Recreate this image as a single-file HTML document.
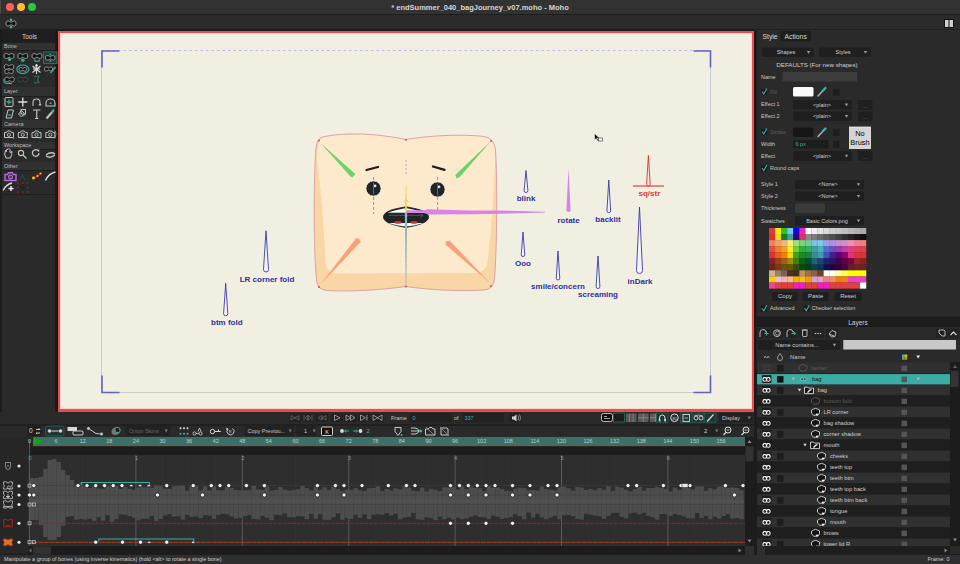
<!DOCTYPE html><html><head><meta charset="utf-8"><style>
html,body{margin:0;padding:0;}
body{width:960px;height:564px;position:relative;overflow:hidden;background:#2a2a2a;font-family:"Liberation Sans",sans-serif;}
.a{position:absolute;}
.t{position:absolute;white-space:nowrap;}
svg.a{overflow:visible;}
</style></head><body>
<div class="a" style="left:0px;top:0px;width:960px;height:14px;background:#323232;"></div>
<div class="a" style="left:0px;top:0px;width:1px;height:30px;background:#4a4a4a;"></div>
<div class="a" style="left:0px;top:14px;width:960px;height:1px;background:#1d1d1d;"></div>
<div class="a" style="left:0px;top:15px;width:960px;height:15px;background:#2b2b2b;"></div>
<div class="a" style="left:0px;top:29px;width:960px;height:1px;background:#1f1f1f;"></div>
<div class="a" style="left:5.5px;top:3px;width:8px;height:8px;border-radius:50%;background:#fe5f57"></div>
<div class="a" style="left:16.5px;top:3px;width:8px;height:8px;border-radius:50%;background:#febc2e"></div>
<div class="a" style="left:27.5px;top:3px;width:8px;height:8px;border-radius:50%;background:#28c840"></div>
<div class="t" style="left:330px;width:300px;text-align:center;top:2.50px;font-size:7.5px;line-height:9.00px;color:#d6d6d6;font-weight:bold;">* endSummer_040_bagJourney_v07.moho - Moho</div>
<svg class="a" style="left:944px;top:19px;" width="10" height="9" viewBox="0 0 10 9"><rect x="0" y="0" width="10" height="9" fill="#111"/><rect x="1" y="1" width="3.5" height="7" fill="#cfcfcf"/><rect x="5.5" y="1" width="3.5" height="7" fill="#cfcfcf"/></svg>
<div class="a" style="left:0px;top:30px;width:57px;height:382px;background:#2a2a2a;"></div>
<div class="a" style="left:0px;top:30px;width:2px;height:382px;background:#1d1d1d;"></div>
<div class="a" style="left:55px;top:30px;width:2px;height:382px;background:#1a1a1a;"></div>
<div class="a" style="left:2px;top:30px;width:53px;height:13px;background:#1f1f1f;"></div>
<div class="t" style="left:-120.5px;width:300px;text-align:center;top:33.10px;font-size:6.5px;line-height:7.80px;color:#d2d2d2;font-weight:normal;">Tools</div>
<div class="a" style="left:2px;top:43px;width:53px;height:7px;background:#313131;"></div>
<div class="a" style="left:2px;top:50px;width:53px;height:1px;background:#1e1e1e;"></div>
<div class="t" style="left:4px;top:43.20px;font-size:5.5px;line-height:6.60px;color:#bdbdbd;font-weight:normal;">Bone</div>
<div class="a" style="left:2px;top:87px;width:53px;height:9px;background:#313131;"></div>
<div class="a" style="left:2px;top:96px;width:53px;height:1px;background:#1e1e1e;"></div>
<div class="t" style="left:4px;top:88.20px;font-size:5.5px;line-height:6.60px;color:#bdbdbd;font-weight:normal;">Layer</div>
<div class="a" style="left:2px;top:120px;width:53px;height:8px;background:#313131;"></div>
<div class="a" style="left:2px;top:128px;width:53px;height:1px;background:#1e1e1e;"></div>
<div class="t" style="left:4px;top:120.70px;font-size:5.5px;line-height:6.60px;color:#bdbdbd;font-weight:normal;">Camera</div>
<div class="a" style="left:2px;top:142px;width:53px;height:7px;background:#313131;"></div>
<div class="a" style="left:2px;top:149px;width:53px;height:1px;background:#1e1e1e;"></div>
<div class="t" style="left:4px;top:142.20px;font-size:5.5px;line-height:6.60px;color:#bdbdbd;font-weight:normal;">Workspace</div>
<div class="a" style="left:2px;top:162px;width:53px;height:8px;background:#313131;"></div>
<div class="a" style="left:2px;top:170px;width:53px;height:1px;background:#1e1e1e;"></div>
<div class="t" style="left:4px;top:162.70px;font-size:5.5px;line-height:6.60px;color:#bdbdbd;font-weight:normal;">Other</div>
<div class="a" style="left:2px;top:194px;width:53px;height:1px;background:#1e1e1e;"></div>
<div class="a" style="left:56px;top:30px;width:699px;height:383px;background:#181818;"></div>
<div class="a" style="left:58px;top:31px;width:696px;height:381px;background:#f04a4c;"></div>
<div class="a" style="left:60px;top:33px;width:692px;height:376px;background:#f0efe2;box-shadow:inset 1px 1px 0 #f6d8d0,inset -1px -1px 0 #f6d8d0;"></div>
<div class="a" style="left:754px;top:30px;width:206px;height:525px;background:#2a2a2a;"></div>
<div class="a" style="left:754px;top:30px;width:3px;height:525px;background:#1c1c1c;"></div>
<div class="a" style="left:0px;top:412px;width:754px;height:143px;background:#262626;"></div>
<div class="a" style="left:0px;top:555px;width:960px;height:9px;background:#2f2f2f;"></div>
<div class="a" style="left:0px;top:554px;width:960px;height:1px;background:#1c1c1c;"></div>
<div class="t" style="left:4px;top:556.23px;font-size:5.45px;line-height:6.54px;color:#cfcfcf;font-weight:normal;">Manipulate a group of bones (using inverse kinematics) (hold &lt;alt&gt; to rotate a single bone)</div>
<div class="t" style="left:649.5px;width:300px;text-align:right;top:556.20px;font-size:5.5px;line-height:6.60px;color:#cfcfcf;font-weight:normal;">Frame: 0</div>
<svg class="a" style="left:0px;top:0px;" width="57" height="200" viewBox="0 0 57 200"><path d="M4.0,56.0 C4.0,52.6 6.8,53.1 9.0,54.8 C11.2,53.1 14.0,52.6 14.0,56.0 C14.0,59.4 11.2,58.9 9.0,57.2 C6.8,58.9 4.0,59.4 4.0,56.0Z" fill="#1c1c1c" stroke="#9c9c9c" stroke-width="0.95"/><circle cx="6.5" cy="56.0" r="1.1" fill="#0c0c0c"/><circle cx="11.5" cy="56.0" r="1.1" fill="#0c0c0c"/><circle cx="9.5" cy="59.5" r="1.6" fill="#33a898"/><circle cx="9.8" cy="59.6" r="0.7" fill="#7fe07a"/><path d="M17.8,56.0 C17.8,52.6 20.6,53.1 22.8,54.8 C25.1,53.1 27.8,52.6 27.8,56.0 C27.8,59.4 25.1,58.9 22.8,57.2 C20.6,58.9 17.8,59.4 17.8,56.0Z" fill="#1c1c1c" stroke="#9c9c9c" stroke-width="0.95"/><circle cx="20.3" cy="56.0" r="1.1" fill="#0c0c0c"/><circle cx="25.3" cy="56.0" r="1.1" fill="#0c0c0c"/><circle cx="22.8" cy="60.3" r="1.8" fill="#33a898"/><path d="M32.0,56.0 C32.0,52.6 34.8,53.1 37.0,54.8 C39.2,53.1 42.0,52.6 42.0,56.0 C42.0,59.4 39.2,58.9 37.0,57.2 C34.8,58.9 32.0,59.4 32.0,56.0Z" fill="#1c1c1c" stroke="#9c9c9c" stroke-width="0.95"/><circle cx="34.5" cy="56.0" r="1.1" fill="#0c0c0c"/><circle cx="39.5" cy="56.0" r="1.1" fill="#0c0c0c"/><path d="M34.5,59.5 a2.5,2 0 1 0 5,0" fill="none" stroke="#33a898" stroke-width="1.2"/><rect x="43.5" y="52" width="13.5" height="11.5" fill="#203b38" stroke="#2a6b62" stroke-width="1"/><path d="M45.5,57.8 C45.5,54.6 48.2,55.1 50.3,56.7 C52.4,55.1 55.0,54.6 55.0,57.8 C55.0,61.0 52.4,60.5 50.3,58.9 C48.2,60.5 45.5,61.0 45.5,57.8Z" fill="#1c1c1c" stroke="#9c9c9c" stroke-width="0.95"/><circle cx="47.9" cy="57.8" r="1.0" fill="#0c0c0c"/><circle cx="52.7" cy="57.8" r="1.0" fill="#0c0c0c"/><circle cx="50.3" cy="54.5" r="0.9" fill="#33a898"/><circle cx="50.3" cy="61" r="0.9" fill="#33a898"/><path d="M4.2,67.0 C4.2,63.8 6.9,64.3 9.0,65.9 C11.1,64.3 13.8,63.8 13.8,67.0 C13.8,70.2 11.1,69.7 9.0,68.1 C6.9,69.7 4.2,70.2 4.2,67.0Z" fill="#1c1c1c" stroke="#9c9c9c" stroke-width="0.95"/><circle cx="6.6" cy="67.0" r="1.0" fill="#0c0c0c"/><circle cx="11.4" cy="67.0" r="1.0" fill="#0c0c0c"/><path d="M4.8,71.5 C4.8,68.6 7.1,69.1 9.0,70.5 C10.9,69.1 13.2,68.6 13.2,71.5 C13.2,74.4 10.9,73.9 9.0,72.5 C7.1,73.9 4.8,74.4 4.8,71.5Z" fill="#1c1c1c" stroke="#9c9c9c" stroke-width="0.95"/><circle cx="6.9" cy="71.5" r="0.9" fill="#0c0c0c"/><circle cx="11.1" cy="71.5" r="0.9" fill="#0c0c0c"/><ellipse cx="22.8" cy="69.3" rx="6" ry="4.3" fill="none" stroke="#33a898" stroke-width="1.2"/><path d="M19.1,69.3 C19.1,66.8 21.1,67.2 22.8,68.4 C24.5,67.2 26.6,66.8 26.6,69.3 C26.6,71.8 24.5,71.4 22.8,70.2 C21.1,71.4 19.1,71.8 19.1,69.3Z" fill="#1c1c1c" stroke="#9c9c9c" stroke-width="0.95"/><circle cx="20.9" cy="69.3" r="0.8" fill="#0c0c0c"/><circle cx="24.7" cy="69.3" r="0.8" fill="#0c0c0c"/><path d="M36.5,64.5 L36.5,74 M32.5,66 L40.5,72.5 M40.5,66 L32.5,72.5 M33,69 L40,69" stroke="#d8d8d8" stroke-width="1.1"/><circle cx="36.5" cy="65.5" r="1.2" fill="#eee"/><path d="M44.5,69.0 C44.5,66.3 46.7,66.7 48.5,68.1 C50.3,66.7 52.5,66.3 52.5,69.0 C52.5,71.7 50.3,71.3 48.5,69.9 C46.7,71.3 44.5,71.7 44.5,69.0Z" fill="#1c1c1c" stroke="#9c9c9c" stroke-width="0.95"/><circle cx="46.5" cy="69.0" r="0.9" fill="#0c0c0c"/><circle cx="50.5" cy="69.0" r="0.9" fill="#0c0c0c"/><path d="M50.5,73 L55.5,67" stroke="#33a898" stroke-width="1.6"/><path d="M4.8,79.5 C4.8,76.3 7.4,76.8 9.5,78.4 C11.6,76.8 14.2,76.3 14.2,79.5 C14.2,82.7 11.6,82.2 9.5,80.6 C7.4,82.2 4.8,82.7 4.8,79.5Z" fill="#1c1c1c" stroke="#9c9c9c" stroke-width="0.95"/><circle cx="7.1" cy="79.5" r="1.0" fill="#0c0c0c"/><circle cx="11.9" cy="79.5" r="1.0" fill="#0c0c0c"/><path d="M4,79 Q3,83 7,83.5 L12,83.5" fill="none" stroke="#33a898" stroke-width="1.1"/><circle cx="9.5" cy="83.2" r="0.8" fill="#7fe07a"/><g opacity="0.35"><path d="M18.3,79.5 C18.3,76.5 20.8,76.9 22.8,78.4 C24.8,76.9 27.3,76.5 27.3,79.5 C27.3,82.5 24.8,82.1 22.8,80.6 C20.8,82.1 18.3,82.5 18.3,79.5Z" fill="#1c1c1c" stroke="#3bb3a6" stroke-width="0.95"/><circle cx="20.6" cy="79.5" r="1.0" fill="#0c0c0c"/><circle cx="25.1" cy="79.5" r="1.0" fill="#0c0c0c"/></g><path d="M34,77 q3,-2 5,0 q-3,3 0,5 q-3,2 -5,0" fill="none" stroke="#2e6f66" stroke-width="1.1"/><rect x="5" y="97.5" width="8" height="9" rx="1" fill="none" stroke="#c4c4c4" stroke-width="1"/><path d="M9,99.5 v5 M6.5,102 h5" stroke="#33a898" stroke-width="1.3"/><path d="M22.8,97.5 v9 M18.3,102 h9" stroke="#e0e0e0" stroke-width="1.3"/><path d="M33,106 v-3.5 a3.5,3.5 0 0 1 7,0 v2" fill="none" stroke="#c4c4c4" stroke-width="1.1"/><path d="M38.5,104 l1.5,2.3 l1.5,-2.3z" fill="#c4c4c4"/><path d="M46,106 v-3 a4.5,4 0 0 1 9,0 v3z" fill="none" stroke="#c4c4c4" stroke-width="1.1"/><path d="M50.5,101.5 l1.3,2.5 h-2.6z" fill="#33a898"/><path d="M6,118 l2,-8 h5.5 l-2,8z" fill="none" stroke="#c4c4c4" stroke-width="1"/><path d="M7.5,115 h4" stroke="#33a898" stroke-width="1.2"/><path d="M18.5,114 l3,-3.5 l3,3 l-3,3.5z" fill="none" stroke="#c4c4c4" stroke-width="1"/><rect x="21" y="109.5" width="4.5" height="4.5" fill="none" stroke="#c4c4c4" stroke-width="1"/><path d="M23,116 l3,-2" stroke="#33a898" stroke-width="1.3"/><path d="M33,110 h7.5 M36.75,110 v8.5 M35,118.5 h3.5" stroke="#c4c4c4" stroke-width="1.2" fill="none"/><path d="M46.5,118.5 l7,-8" stroke="#c4c4c4" stroke-width="2"/><path d="M51.5,112.5 l2.5,-3" stroke="#33a898" stroke-width="2"/><path d="M4.5,137.5 v-5 h2 l1,-1.5 h3 l1,1.5 h2 v5z" fill="none" stroke="#c4c4c4" stroke-width="1"/><circle cx="9" cy="134.8" r="1.6" fill="none" stroke="#c4c4c4" stroke-width="0.9"/><path d="M18.3,137.5 v-5 h2 l1,-1.5 h3 l1,1.5 h2 v5z" fill="none" stroke="#c4c4c4" stroke-width="1"/><circle cx="22.8" cy="134.8" r="1.6" fill="none" stroke="#c4c4c4" stroke-width="0.9"/><path d="M32.0,137.5 v-5 h2 l1,-1.5 h3 l1,1.5 h2 v5z" fill="none" stroke="#c4c4c4" stroke-width="1"/><circle cx="36.5" cy="134.8" r="1.6" fill="none" stroke="#c4c4c4" stroke-width="0.9"/><path d="M45.8,137.5 v-5 h2 l1,-1.5 h3 l1,1.5 h2 v5z" fill="none" stroke="#c4c4c4" stroke-width="1"/><circle cx="50.3" cy="134.8" r="1.6" fill="none" stroke="#c4c4c4" stroke-width="0.9"/><circle cx="13.5" cy="138" r="0.9" fill="#33a898"/><path d="M27.5,135 v3.5" stroke="#33a898" stroke-width="1"/><path d="M39.5,139 q2,-1 2,-3" stroke="#33a898" stroke-width="1" fill="none"/><path d="M55,130.5 q2,3 0,8" stroke="#33a898" stroke-width="1" fill="none"/><path d="M6,158 q-2,-3 -1,-6 l1,-2 v2 l1,-3 l1,0.5 l1,-1 l1,1 v3 l2,-1 q0,3 -1.5,6.5z" fill="none" stroke="#c4c4c4" stroke-width="1"/><circle cx="21" cy="153" r="2.6" fill="none" stroke="#c4c4c4" stroke-width="1.1"/><path d="M23,155 l3.5,3.5" stroke="#c4c4c4" stroke-width="1.3"/><path d="M39,153 a3.3,3.3 0 1 1 -1.5,-2.8" fill="none" stroke="#c4c4c4" stroke-width="1.3"/><path d="M36.5,149.5 l3,0.3 l-0.8,2.5z" fill="#c4c4c4"/><path d="M46,156 q4,3 9,-1 M55,154 q-4,-3 -9,1" fill="none" stroke="#c4c4c4" stroke-width="1.3"/><path d="M5,180.5 v-6 h2.5 l1.2,-1.8 h3.6 l1.2,1.8 h2.5 v6z" fill="none" stroke="#b06ee0" stroke-width="1.4"/><circle cx="10.5" cy="177" r="1.9" fill="none" stroke="#b06ee0" stroke-width="1.2"/><circle cx="10.2" cy="177" r="0.6" fill="#ff3ad0"/><path d="M19.5,180 l3,-4 l3,4 M22.5,176 v-2" fill="none" stroke="#2a4f4b" stroke-width="1"/><path d="M33,179 l7,-5" stroke="#b0161a" stroke-width="2.2"/><circle cx="33.5" cy="178" r="1.4" fill="#f4d020"/><circle cx="37.5" cy="176" r="1.1" fill="#f0b0b0"/><circle cx="40.5" cy="173.5" r="1.1" fill="#f4d020"/><path d="M45.5,180.5 q3,-7 10,-8.5" fill="none" stroke="#dedede" stroke-width="1.4"/><path d="M3,190.5 q3,-6 9,-7.5" fill="none" stroke="#dedede" stroke-width="1.3"/><path d="M11,186 v5 M8.5,188.5 h5" stroke="#eee" stroke-width="1.4"/><g fill="#c82020"><circle cx="18" cy="183" r="0.8"/><circle cx="22.8" cy="183" r="0.8"/><circle cx="27.6" cy="183" r="0.8"/><circle cx="18" cy="187.5" r="0.8"/><circle cx="27.6" cy="187.5" r="0.8"/><circle cx="18" cy="192" r="0.8"/><circle cx="22.8" cy="192" r="0.8"/><circle cx="27.6" cy="192" r="0.8"/></g><path d="M22.8,184 v7 M19,187.5 h7.5" stroke="#222" stroke-width="1"/><path d="M6.0,23.5 C6.0,20.1 8.8,20.6 11.0,22.3 C13.2,20.6 16.0,20.1 16.0,23.5 C16.0,26.9 13.2,26.4 11.0,24.7 C8.8,26.4 6.0,26.9 6.0,23.5Z" fill="#1c1c1c" stroke="#a0a0a0" stroke-width="0.95"/><circle cx="8.5" cy="23.5" r="1.1" fill="#0c0c0c"/><circle cx="13.5" cy="23.5" r="1.1" fill="#0c0c0c"/><circle cx="11" cy="19.8" r="1.2" fill="#3bb3a6"/><circle cx="11" cy="27.3" r="1.2" fill="#3bb3a6"/></svg>
<svg class="a" style="left:0px;top:0px;" width="960" height="420" viewBox="0 0 960 420"><line x1="101.5" y1="50.5" x2="710.5" y2="50.5" stroke="#b4b4e4" stroke-width="0.9" stroke-dasharray="2.5,3"/><line x1="101.5" y1="50.5" x2="101.5" y2="392.5" stroke="#c9c6bc" stroke-width="0.9"/><line x1="101.5" y1="392.5" x2="710.5" y2="392.5" stroke="#c9c6bc" stroke-width="0.9"/><line x1="710.5" y1="50.5" x2="710.5" y2="392.5" stroke="#c4c4de" stroke-width="0.9"/><path d="M102,67.5 V51 H119.5" fill="none" stroke="#6262c0" stroke-width="1.6"/><path d="M693.5,51 H710.5 V67.5" fill="none" stroke="#6262c0" stroke-width="1.6"/><path d="M102,375.5 V392.5 H119.5" fill="none" stroke="#6262c0" stroke-width="1.6"/><path d="M693.5,392.5 H710.5 V375.5" fill="none" stroke="#6262c0" stroke-width="1.6"/><path d="M324,136.5 C345,132.5 375,133 406,139.5 C437,134.5 467,134.5 484,136.5 Q494.5,138 495.5,150 C497.5,180 497,250 494.5,279 Q493.5,289.5 484,290 C460,291.5 430,290 406,286.5 C380,290 350,292 327,290.5 Q317,290 316.5,280 C313.5,250 313.5,180 316,148 Q316.5,138 324,136.5 Z" fill="#f8d6a6"/><path d="M324,136.5 C345,132.5 375,133 406,139.5 C437,134.5 467,134.5 484,136.5 Q494.5,138 495.5,150 C495,175 491,240 487.5,262 Q486,272.5 475,273 L338,273.5 Q326.5,273 325.5,262 C324,230 321,190 317.5,165 Q315.5,140 324,136.5 Z" fill="#fde9cb"/><path d="M324,136.5 C345,132.5 375,133 406,139.5 C437,134.5 467,134.5 484,136.5 Q494.5,138 495.5,150 C497.5,180 497,250 494.5,279 Q493.5,289.5 484,290 C460,291.5 430,290 406,286.5 C380,290 350,292 327,290.5 Q317,290 316.5,280 C313.5,250 313.5,180 316,148 Q316.5,138 324,136.5 Z" fill="none" stroke="#d8909c" stroke-width="0.8"/><path d="M320.5,143 L355.3,174 L352.5,177.6 L350.5,176.5 Z" fill="#6ad46a"/><path d="M491,141 L459.5,177.3 L456.5,178.5 L455.3,175 Z" fill="#6ad46a"/><path d="M320,285 L356.3,238 L359,238.6 L360.8,241.8 Z" fill="#f5a27a"/><path d="M490,283 L445.5,244.6 L445.8,241.5 L449.5,240.4 Z" fill="#f5a27a"/><line x1="373.6" y1="177" x2="373.6" y2="214" stroke="#b070d8" stroke-width="0.9" stroke-dasharray="3,2"/><line x1="437.6" y1="177" x2="437.6" y2="214" stroke="#b070d8" stroke-width="0.9" stroke-dasharray="3,2"/><line x1="406" y1="160" x2="406" y2="175" stroke="#c080d0" stroke-width="0.8" stroke-dasharray="2,2"/><path d="M366.5,170 L378,167" stroke="#1c1c1c" stroke-width="2.3" stroke-linecap="round"/><path d="M433,166.5 L444.5,169.8" stroke="#1c1c1c" stroke-width="2.3" stroke-linecap="round"/><circle cx="373.5" cy="188.5" r="7.7" fill="#1e2626" stroke="#fff6ea" stroke-width="1"/><circle cx="375.1" cy="185.9" r="1.3" fill="#f4eef0"/><circle cx="375.1" cy="185.9" r="0.5" fill="#e090b0"/><line x1="373.5" y1="182.5" x2="373.5" y2="194.5" stroke="#8a50c0" stroke-width="0.9"/><circle cx="437.5" cy="189.5" r="7.7" fill="#1e2626" stroke="#fff6ea" stroke-width="1"/><circle cx="439.1" cy="186.9" r="1.3" fill="#f4eef0"/><circle cx="439.1" cy="186.9" r="0.5" fill="#e090b0"/><line x1="437.5" y1="183.5" x2="437.5" y2="195.5" stroke="#8a50c0" stroke-width="0.9"/><path d="M383.5,217 C383.5,211 395,208.8 406,206.8 C417,208.8 428.5,211 428.5,217 C428.5,223 417,225.3 406,227.5 C395,225.3 383.5,223 383.5,217 Z" fill="#1e2525" stroke="#232323" stroke-width="0.9"/><path d="M387.5,212.8 C393,210.3 400,209.2 406,208 C412,209.2 419,210.3 424.5,212.8 Z" fill="#f6f6f2"/><path d="M388.5,223 L423.5,223 C418,225 412,225.8 406,226.6 C400,225.8 394,225 388.5,223 Z" fill="#f6f6f2"/><ellipse cx="398" cy="222.4" rx="3.6" ry="1.3" fill="#d83030"/><ellipse cx="414" cy="222.4" rx="3.6" ry="1.3" fill="#d83030"/><path d="M389,215.3 L423,215.3 M421,213.5 L423,215.3 L420.5,217.5" fill="none" stroke="#9a6a70" stroke-width="0.6"/><path d="M406,210.2 L424,210.2 L428,209.3 L470,210.5 L500,210.6 L545,211.8 L545,212.4 L500,213.8 L470,214.3 L428,214.5 L424,213 L406,213 Z" fill="#d684e8"/><path d="M405,211 L405.7,185 L406.3,185 L407,211 Z" fill="#ecd83a"/><path d="M403.5,202 L406,199.5 L408.5,202" fill="none" stroke="#c8a0c8" stroke-width="0.7"/><path d="M404.8,213 L407.2,213 L406.3,286 L405.7,286 Z" fill="#94b4c4"/><line x1="406" y1="228" x2="406" y2="270" stroke="#90c890" stroke-width="0.5" stroke-dasharray="1,3"/><circle cx="319" cy="140.5" r="0.9" fill="#d04060"/><circle cx="491" cy="141" r="0.9" fill="#d04060"/><circle cx="491" cy="286" r="0.9" fill="#d04060"/><circle cx="319" cy="287" r="0.9" fill="#d04060"/><circle cx="406" cy="140" r="0.9" fill="#d04060"/><circle cx="406" cy="286.5" r="0.9" fill="#d04060"/><path d="M526,170.5 L527.9,190.6 A1.9,1.9 0 0 1 524.1,190.6 Z" fill="#f4f4fa" stroke="#3a3aa8" stroke-width="0.9" stroke-linejoin="round"/><path d="M568.5,168.5 L570.6,210 A2.1,2.1 0 0 1 566.4,210 Z" fill="#d684e8"/><path d="M608.8,180 L610.65,210.85 A1.85,1.85 0 0 1 606.9499999999999,210.85 Z" fill="#f4f4fa" stroke="#3a3aa8" stroke-width="0.9" stroke-linejoin="round"/><path d="M648.4,155.6 L650.1999999999999,184.2 A1.8,1.8 0 0 1 646.6,184.2 Z" fill="#f6e6e0" stroke="#e03030" stroke-width="0.9" stroke-linejoin="round"/><line x1="633" y1="186" x2="664" y2="186" stroke="#e03030" stroke-width="1.1"/><path d="M523,232 L524.75,254.75 A1.75,1.75 0 0 1 521.25,254.75 Z" fill="#f4f4fa" stroke="#3a3aa8" stroke-width="0.9" stroke-linejoin="round"/><path d="M558,251 L559.75,278.25 A1.75,1.75 0 0 1 556.25,278.25 Z" fill="#f4f4fa" stroke="#3a3aa8" stroke-width="0.9" stroke-linejoin="round"/><path d="M598,256 L599.9,286.6 A1.9,1.9 0 0 1 596.1,286.6 Z" fill="#f4f4fa" stroke="#3a3aa8" stroke-width="0.9" stroke-linejoin="round"/><path d="M639.5,207 L642.5,270.5 A3.0,3.0 0 0 1 636.5,270.5 Z" fill="#f4f4fa" stroke="#3a3aa8" stroke-width="0.9" stroke-linejoin="round"/><path d="M266,230.8 L268.5,269.5 A2.5,2.5 0 0 1 263.5,269.5 Z" fill="#f4f4fa" stroke="#3a3aa8" stroke-width="0.9" stroke-linejoin="round"/><path d="M225.7,283.3 L227.79999999999998,313.7 A2.1,2.1 0 0 1 223.6,313.7 Z" fill="#f4f4fa" stroke="#3a3aa8" stroke-width="0.9" stroke-linejoin="round"/></svg>
<div class="t" style="left:376px;width:300px;text-align:center;top:194.20px;font-size:8px;line-height:9.60px;color:#3030a0;font-weight:bold;">blink</div>
<div class="t" style="left:418.6px;width:300px;text-align:center;top:216.20px;font-size:8px;line-height:9.60px;color:#3030a0;font-weight:bold;">rotate</div>
<div class="t" style="left:458px;width:300px;text-align:center;top:215.20px;font-size:8px;line-height:9.60px;color:#3030a0;font-weight:bold;">backlit</div>
<div class="t" style="left:373px;width:300px;text-align:center;top:258.70px;font-size:8px;line-height:9.60px;color:#3030a0;font-weight:bold;">Ooo</div>
<div class="t" style="left:408px;width:300px;text-align:center;top:281.90px;font-size:8px;line-height:9.60px;color:#3030a0;font-weight:bold;">smile/concern</div>
<div class="t" style="left:448px;width:300px;text-align:center;top:290.20px;font-size:8px;line-height:9.60px;color:#3030a0;font-weight:bold;">screaming</div>
<div class="t" style="left:490px;width:300px;text-align:center;top:277.20px;font-size:8px;line-height:9.60px;color:#3030a0;font-weight:bold;">inDark</div>
<div class="t" style="left:117px;width:300px;text-align:center;top:274.70px;font-size:8px;line-height:9.60px;color:#3030a0;font-weight:bold;">LR corner fold</div>
<div class="t" style="left:76.80000000000001px;width:300px;text-align:center;top:318.20px;font-size:8px;line-height:9.60px;color:#3030a0;font-weight:bold;">btm fold</div>
<div class="t" style="left:499.4px;width:300px;text-align:center;top:188.70px;font-size:8px;line-height:9.60px;color:#e03a3a;font-weight:bold;">sq/str</div>
<svg class="a" style="left:594px;top:133px;" width="9" height="9" viewBox="0 0 9 9"><path d="M0.5,0.5 L0.5,7 L2.2,5.5 L3.5,8 L4.5,7.5 L3.3,5 L5.5,5 Z" fill="#111" stroke="#fff" stroke-width="0.5"/><rect x="4.5" y="5" width="4" height="3" fill="#fff" stroke="#222" stroke-width="0.6"/></svg>
<div class="a" style="left:0px;top:412px;width:754px;height:13px;background:#2a2a2a;"></div>
<div class="a" style="left:0px;top:424px;width:754px;height:1.5px;background:#202020;"></div>
<div class="a" style="left:0px;top:425.5px;width:754px;height:11.5px;background:#2a2a2a;"></div>
<div class="a" style="left:33px;top:437px;width:712px;height:9px;background:#3a7066;"></div>
<div class="a" style="left:28px;top:446px;width:717px;height:9px;background:#1d1d1d;"></div>
<div class="a" style="left:28px;top:446px;width:717px;height:1px;background:#3a2020;"></div>
<div class="a" style="left:28px;top:455px;width:717px;height:91px;background:#2e2e2e;"></div>
<div class="a" style="left:745px;top:437px;width:9px;height:109px;background:#1d1d1d;"></div>
<div class="a" style="left:28px;top:546px;width:717px;height:9px;background:#1c1c1c;"></div>
<div class="a" style="left:745px;top:546px;width:9px;height:9px;background:#2f2f2f;"></div>
<div class="t" style="left:-93.902px;width:300px;text-align:center;top:438.20px;font-size:5.5px;line-height:6.60px;color:#b8d0ca;font-weight:normal;">6</div>
<div class="t" style="left:-67.304px;width:300px;text-align:center;top:438.20px;font-size:5.5px;line-height:6.60px;color:#b8d0ca;font-weight:normal;">12</div>
<div class="t" style="left:-40.706px;width:300px;text-align:center;top:438.20px;font-size:5.5px;line-height:6.60px;color:#b8d0ca;font-weight:normal;">18</div>
<div class="t" style="left:-14.108000000000004px;width:300px;text-align:center;top:438.20px;font-size:5.5px;line-height:6.60px;color:#b8d0ca;font-weight:normal;">24</div>
<div class="t" style="left:12.490000000000009px;width:300px;text-align:center;top:438.20px;font-size:5.5px;line-height:6.60px;color:#b8d0ca;font-weight:normal;">30</div>
<div class="t" style="left:39.087999999999994px;width:300px;text-align:center;top:438.20px;font-size:5.5px;line-height:6.60px;color:#b8d0ca;font-weight:normal;">36</div>
<div class="t" style="left:65.68599999999998px;width:300px;text-align:center;top:438.20px;font-size:5.5px;line-height:6.60px;color:#b8d0ca;font-weight:normal;">42</div>
<div class="t" style="left:92.28399999999999px;width:300px;text-align:center;top:438.20px;font-size:5.5px;line-height:6.60px;color:#b8d0ca;font-weight:normal;">48</div>
<div class="t" style="left:118.882px;width:300px;text-align:center;top:438.20px;font-size:5.5px;line-height:6.60px;color:#b8d0ca;font-weight:normal;">54</div>
<div class="t" style="left:145.48000000000002px;width:300px;text-align:center;top:438.20px;font-size:5.5px;line-height:6.60px;color:#b8d0ca;font-weight:normal;">60</div>
<div class="t" style="left:172.07799999999997px;width:300px;text-align:center;top:438.20px;font-size:5.5px;line-height:6.60px;color:#b8d0ca;font-weight:normal;">66</div>
<div class="t" style="left:198.676px;width:300px;text-align:center;top:438.20px;font-size:5.5px;line-height:6.60px;color:#b8d0ca;font-weight:normal;">72</div>
<div class="t" style="left:225.274px;width:300px;text-align:center;top:438.20px;font-size:5.5px;line-height:6.60px;color:#b8d0ca;font-weight:normal;">78</div>
<div class="t" style="left:251.87199999999996px;width:300px;text-align:center;top:438.20px;font-size:5.5px;line-height:6.60px;color:#b8d0ca;font-weight:normal;">84</div>
<div class="t" style="left:278.46999999999997px;width:300px;text-align:center;top:438.20px;font-size:5.5px;line-height:6.60px;color:#b8d0ca;font-weight:normal;">90</div>
<div class="t" style="left:305.068px;width:300px;text-align:center;top:438.20px;font-size:5.5px;line-height:6.60px;color:#b8d0ca;font-weight:normal;">96</div>
<div class="t" style="left:331.666px;width:300px;text-align:center;top:438.20px;font-size:5.5px;line-height:6.60px;color:#b8d0ca;font-weight:normal;">102</div>
<div class="t" style="left:358.264px;width:300px;text-align:center;top:438.20px;font-size:5.5px;line-height:6.60px;color:#b8d0ca;font-weight:normal;">108</div>
<div class="t" style="left:384.86199999999997px;width:300px;text-align:center;top:438.20px;font-size:5.5px;line-height:6.60px;color:#b8d0ca;font-weight:normal;">114</div>
<div class="t" style="left:411.46000000000004px;width:300px;text-align:center;top:438.20px;font-size:5.5px;line-height:6.60px;color:#b8d0ca;font-weight:normal;">120</div>
<div class="t" style="left:438.058px;width:300px;text-align:center;top:438.20px;font-size:5.5px;line-height:6.60px;color:#b8d0ca;font-weight:normal;">126</div>
<div class="t" style="left:464.65599999999995px;width:300px;text-align:center;top:438.20px;font-size:5.5px;line-height:6.60px;color:#b8d0ca;font-weight:normal;">132</div>
<div class="t" style="left:491.254px;width:300px;text-align:center;top:438.20px;font-size:5.5px;line-height:6.60px;color:#b8d0ca;font-weight:normal;">138</div>
<div class="t" style="left:517.852px;width:300px;text-align:center;top:438.20px;font-size:5.5px;line-height:6.60px;color:#b8d0ca;font-weight:normal;">144</div>
<div class="t" style="left:544.4499999999999px;width:300px;text-align:center;top:438.20px;font-size:5.5px;line-height:6.60px;color:#b8d0ca;font-weight:normal;">150</div>
<div class="t" style="left:571.048px;width:300px;text-align:center;top:438.20px;font-size:5.5px;line-height:6.60px;color:#b8d0ca;font-weight:normal;">156</div>
<svg class="a" style="left:0px;top:0px;" width="960" height="564" viewBox="0 0 960 564"><path d="M33.5,437.5 L33.5,445.5 L44,441.5 Z" fill="#1aa01a"/><line x1="29.5" y1="455" x2="29.5" y2="546" stroke="#333" stroke-width="0.8"/><line x1="56.1" y1="455" x2="56.1" y2="546" stroke="#333" stroke-width="0.8"/><line x1="82.7" y1="455" x2="82.7" y2="546" stroke="#333" stroke-width="0.8"/><line x1="109.3" y1="455" x2="109.3" y2="546" stroke="#333" stroke-width="0.8"/><line x1="135.9" y1="455" x2="135.9" y2="546" stroke="#5a5a5a" stroke-width="1"/><line x1="162.5" y1="455" x2="162.5" y2="546" stroke="#333" stroke-width="0.8"/><line x1="189.1" y1="455" x2="189.1" y2="546" stroke="#333" stroke-width="0.8"/><line x1="215.7" y1="455" x2="215.7" y2="546" stroke="#333" stroke-width="0.8"/><line x1="242.3" y1="455" x2="242.3" y2="546" stroke="#5a5a5a" stroke-width="1"/><line x1="268.9" y1="455" x2="268.9" y2="546" stroke="#333" stroke-width="0.8"/><line x1="295.5" y1="455" x2="295.5" y2="546" stroke="#333" stroke-width="0.8"/><line x1="322.1" y1="455" x2="322.1" y2="546" stroke="#333" stroke-width="0.8"/><line x1="348.7" y1="455" x2="348.7" y2="546" stroke="#5a5a5a" stroke-width="1"/><line x1="375.3" y1="455" x2="375.3" y2="546" stroke="#333" stroke-width="0.8"/><line x1="401.9" y1="455" x2="401.9" y2="546" stroke="#333" stroke-width="0.8"/><line x1="428.5" y1="455" x2="428.5" y2="546" stroke="#333" stroke-width="0.8"/><line x1="455.1" y1="455" x2="455.1" y2="546" stroke="#5a5a5a" stroke-width="1"/><line x1="481.7" y1="455" x2="481.7" y2="546" stroke="#333" stroke-width="0.8"/><line x1="508.3" y1="455" x2="508.3" y2="546" stroke="#333" stroke-width="0.8"/><line x1="534.9" y1="455" x2="534.9" y2="546" stroke="#333" stroke-width="0.8"/><line x1="561.5" y1="455" x2="561.5" y2="546" stroke="#5a5a5a" stroke-width="1"/><line x1="588.1" y1="455" x2="588.1" y2="546" stroke="#333" stroke-width="0.8"/><line x1="614.7" y1="455" x2="614.7" y2="546" stroke="#333" stroke-width="0.8"/><line x1="641.3" y1="455" x2="641.3" y2="546" stroke="#333" stroke-width="0.8"/><line x1="667.9" y1="455" x2="667.9" y2="546" stroke="#5a5a5a" stroke-width="1"/><line x1="694.4" y1="455" x2="694.4" y2="546" stroke="#333" stroke-width="0.8"/><line x1="721.0" y1="455" x2="721.0" y2="546" stroke="#333" stroke-width="0.8"/><g fill="#4d4d4d"><rect x="29.9" y="478.0" width="4.43" height="42.0"/><rect x="34.3" y="478.0" width="4.43" height="42.0"/><rect x="38.8" y="477.0" width="4.43" height="48.0"/><rect x="43.2" y="469.0" width="4.43" height="68.0"/><rect x="47.6" y="460.0" width="4.43" height="80.0"/><rect x="52.1" y="459.0" width="4.43" height="81.0"/><rect x="56.5" y="462.0" width="4.43" height="75.0"/><rect x="60.9" y="470.0" width="4.43" height="56.0"/><rect x="65.4" y="475.0" width="4.43" height="42.0"/><rect x="69.8" y="480.0" width="4.43" height="36.0"/><rect x="74.2" y="486.0" width="4.43" height="33.7"/><rect x="78.7" y="483.6" width="4.43" height="35.3"/><rect x="83.1" y="486.0" width="4.43" height="33.6"/><rect x="87.5" y="487.9" width="4.43" height="31.0"/><rect x="92.0" y="485.6" width="4.43" height="35.3"/><rect x="96.4" y="488.6" width="4.43" height="28.5"/><rect x="100.8" y="488.8" width="4.43" height="32.0"/><rect x="105.3" y="485.6" width="4.43" height="29.4"/><rect x="109.7" y="484.1" width="4.43" height="37.7"/><rect x="114.1" y="486.0" width="4.43" height="33.0"/><rect x="118.6" y="488.8" width="4.43" height="25.6"/><rect x="123.0" y="486.9" width="4.43" height="27.8"/><rect x="127.4" y="488.8" width="4.43" height="27.2"/><rect x="131.9" y="489.8" width="4.43" height="27.8"/><rect x="136.3" y="487.6" width="4.43" height="32.7"/><rect x="140.7" y="487.2" width="4.43" height="31.5"/><rect x="145.2" y="487.4" width="4.43" height="31.4"/><rect x="149.6" y="487.7" width="4.43" height="28.2"/><rect x="154.0" y="484.8" width="4.43" height="36.4"/><rect x="158.5" y="485.7" width="4.43" height="33.3"/><rect x="162.9" y="488.7" width="4.43" height="26.7"/><rect x="167.3" y="488.9" width="4.43" height="25.2"/><rect x="171.8" y="486.3" width="4.43" height="30.2"/><rect x="176.2" y="485.9" width="4.43" height="30.5"/><rect x="180.6" y="485.3" width="4.43" height="34.4"/><rect x="185.1" y="490.6" width="4.43" height="24.3"/><rect x="189.5" y="485.7" width="4.43" height="31.2"/><rect x="193.9" y="485.3" width="4.43" height="30.9"/><rect x="198.4" y="490.4" width="4.43" height="27.6"/><rect x="202.8" y="486.5" width="4.43" height="28.7"/><rect x="207.2" y="490.4" width="4.43" height="25.3"/><rect x="211.7" y="485.6" width="4.43" height="33.3"/><rect x="216.1" y="490.2" width="4.43" height="24.7"/><rect x="220.5" y="490.4" width="4.43" height="23.2"/><rect x="225.0" y="486.6" width="4.43" height="27.8"/><rect x="229.4" y="487.9" width="4.43" height="28.5"/><rect x="233.8" y="490.0" width="4.43" height="28.5"/><rect x="238.3" y="490.3" width="4.43" height="27.5"/><rect x="242.7" y="490.4" width="4.43" height="25.7"/><rect x="247.1" y="489.9" width="4.43" height="25.0"/><rect x="251.5" y="485.8" width="4.43" height="33.2"/><rect x="256.0" y="489.4" width="4.43" height="30.1"/><rect x="260.4" y="490.0" width="4.43" height="25.9"/><rect x="264.8" y="486.5" width="4.43" height="31.2"/><rect x="269.3" y="490.6" width="4.43" height="29.6"/><rect x="273.7" y="490.0" width="4.43" height="24.7"/><rect x="278.1" y="486.9" width="4.43" height="28.3"/><rect x="282.6" y="489.6" width="4.43" height="23.8"/><rect x="287.0" y="490.7" width="4.43" height="26.4"/><rect x="291.4" y="489.9" width="4.43" height="27.4"/><rect x="295.9" y="489.2" width="4.43" height="26.9"/><rect x="300.3" y="486.0" width="4.43" height="30.4"/><rect x="304.7" y="488.1" width="4.43" height="31.1"/><rect x="309.2" y="490.3" width="4.43" height="23.6"/><rect x="313.6" y="486.3" width="4.43" height="32.5"/><rect x="318.0" y="489.9" width="4.43" height="24.2"/><rect x="322.5" y="487.3" width="4.43" height="32.5"/><rect x="326.9" y="490.2" width="4.43" height="29.6"/><rect x="331.3" y="486.5" width="4.43" height="30.7"/><rect x="335.8" y="489.0" width="4.43" height="24.4"/><rect x="340.2" y="491.1" width="4.43" height="28.7"/><rect x="344.6" y="490.0" width="4.43" height="27.9"/><rect x="349.1" y="490.0" width="4.43" height="28.9"/><rect x="353.5" y="488.1" width="4.43" height="26.7"/><rect x="357.9" y="490.4" width="4.43" height="27.6"/><rect x="362.4" y="491.0" width="4.43" height="23.3"/><rect x="366.8" y="488.3" width="4.43" height="30.7"/><rect x="371.2" y="488.0" width="4.43" height="26.7"/><rect x="375.7" y="486.4" width="4.43" height="27.8"/><rect x="380.1" y="491.3" width="4.43" height="23.3"/><rect x="384.5" y="489.0" width="4.43" height="24.1"/><rect x="389.0" y="490.4" width="4.43" height="24.9"/><rect x="393.4" y="488.3" width="4.43" height="25.3"/><rect x="397.8" y="489.4" width="4.43" height="29.8"/><rect x="402.3" y="486.0" width="4.43" height="31.5"/><rect x="406.7" y="487.6" width="4.43" height="29.3"/><rect x="411.1" y="490.7" width="4.43" height="22.2"/><rect x="415.6" y="491.3" width="4.43" height="28.1"/><rect x="420.0" y="487.6" width="4.43" height="32.2"/><rect x="424.4" y="491.3" width="4.43" height="26.0"/><rect x="428.9" y="488.8" width="4.43" height="29.2"/><rect x="433.3" y="489.7" width="4.43" height="30.4"/><rect x="437.7" y="491.0" width="4.43" height="25.6"/><rect x="442.2" y="487.4" width="4.43" height="31.9"/><rect x="446.6" y="487.4" width="4.43" height="30.4"/><rect x="451.0" y="487.1" width="4.43" height="32.3"/><rect x="455.5" y="489.5" width="4.43" height="28.2"/><rect x="459.9" y="486.5" width="4.43" height="32.6"/><rect x="464.3" y="489.2" width="4.43" height="29.3"/><rect x="468.8" y="486.7" width="4.43" height="30.1"/><rect x="473.2" y="488.0" width="4.43" height="27.4"/><rect x="477.6" y="488.3" width="4.43" height="28.8"/><rect x="482.1" y="491.0" width="4.43" height="26.3"/><rect x="486.5" y="486.0" width="4.43" height="33.1"/><rect x="490.9" y="487.5" width="4.43" height="28.0"/><rect x="495.4" y="487.4" width="4.43" height="29.5"/><rect x="499.8" y="489.1" width="4.43" height="29.8"/><rect x="504.2" y="491.0" width="4.43" height="27.1"/><rect x="508.7" y="491.3" width="4.43" height="25.7"/><rect x="513.1" y="488.8" width="4.43" height="25.4"/><rect x="517.5" y="487.6" width="4.43" height="28.6"/><rect x="522.0" y="488.1" width="4.43" height="31.3"/><rect x="526.4" y="490.1" width="4.43" height="22.5"/><rect x="530.8" y="489.8" width="4.43" height="27.8"/><rect x="535.3" y="490.4" width="4.43" height="23.4"/><rect x="539.7" y="486.5" width="4.43" height="31.0"/><rect x="544.1" y="489.1" width="4.43" height="30.1"/><rect x="548.6" y="489.7" width="4.43" height="27.8"/><rect x="553.0" y="490.4" width="4.43" height="25.4"/><rect x="557.4" y="487.1" width="4.43" height="32.3"/><rect x="561.9" y="486.6" width="4.43" height="28.7"/><rect x="566.3" y="488.3" width="4.43" height="26.6"/><rect x="570.7" y="490.7" width="4.43" height="25.5"/><rect x="575.2" y="486.9" width="4.43" height="32.0"/><rect x="579.6" y="487.6" width="4.43" height="32.1"/><rect x="584.0" y="490.0" width="4.43" height="23.8"/><rect x="588.5" y="489.0" width="4.43" height="25.6"/><rect x="592.9" y="490.3" width="4.43" height="25.3"/><rect x="597.3" y="488.1" width="4.43" height="28.2"/><rect x="601.8" y="489.8" width="4.43" height="29.0"/><rect x="606.2" y="486.1" width="4.43" height="29.8"/><rect x="610.6" y="491.1" width="4.43" height="21.7"/><rect x="615.1" y="486.7" width="4.43" height="26.1"/><rect x="619.5" y="487.6" width="4.43" height="29.2"/><rect x="623.9" y="489.8" width="4.43" height="28.6"/><rect x="628.4" y="491.4" width="4.43" height="22.1"/><rect x="632.8" y="489.0" width="4.43" height="23.7"/><rect x="637.2" y="486.9" width="4.43" height="27.4"/><rect x="641.7" y="490.7" width="4.43" height="22.1"/><rect x="646.1" y="488.0" width="4.43" height="27.8"/><rect x="650.5" y="488.0" width="4.43" height="29.4"/><rect x="655.0" y="487.1" width="4.43" height="32.6"/><rect x="659.4" y="487.7" width="4.43" height="26.3"/><rect x="663.8" y="488.9" width="4.43" height="25.0"/><rect x="668.3" y="491.4" width="4.43" height="24.6"/><rect x="672.7" y="487.6" width="4.43" height="26.3"/><rect x="677.1" y="490.0" width="4.43" height="25.1"/><rect x="681.6" y="487.7" width="4.43" height="28.7"/><rect x="686.0" y="488.1" width="4.43" height="30.1"/><rect x="690.4" y="489.3" width="4.43" height="29.1"/><rect x="694.8" y="486.5" width="4.43" height="26.6"/><rect x="699.3" y="486.4" width="4.43" height="31.6"/><rect x="703.7" y="490.8" width="4.43" height="25.1"/><rect x="708.1" y="488.1" width="4.43" height="31.3"/><rect x="712.6" y="489.4" width="4.43" height="27.3"/><rect x="717.0" y="486.7" width="4.43" height="31.8"/><rect x="721.4" y="486.3" width="4.43" height="29.7"/><rect x="725.9" y="487.9" width="4.43" height="26.1"/><rect x="730.3" y="487.5" width="4.43" height="31.1"/><rect x="734.7" y="488.0" width="4.43" height="29.9"/><rect x="739.2" y="490.3" width="4.43" height="28.9"/></g><rect x="31" y="499.5" width="713" height="3.5" fill="#515151"/><line x1="28" y1="485.5" x2="745" y2="485.5" stroke="#3c3c3c" stroke-width="0.6"/><line x1="28" y1="495" x2="745" y2="495" stroke="#3c3c3c" stroke-width="0.6"/><line x1="28" y1="504.5" x2="745" y2="504.5" stroke="#3c3c3c" stroke-width="0.6"/><line x1="33" y1="523.3" x2="745" y2="523.3" stroke="#962828" stroke-width="0.9" stroke-dasharray="4,0.8"/><line x1="33" y1="542.3" x2="745" y2="542.3" stroke="#a8401e" stroke-width="1" stroke-dasharray="5,0.6"/><line x1="29.5" y1="440" x2="29.5" y2="546" stroke="#2a7a70" stroke-width="0.8"/><path d="M81.3,485 V482.5 H149.5 V485" fill="none" stroke="#38b0a0" stroke-width="1.1"/><path d="M98.8,541.5 V539 H193.7 V541.5" fill="none" stroke="#38b0a0" stroke-width="1.1"/><circle cx="78" cy="485.6" r="2.1" fill="#f2f2f2" stroke="#181818" stroke-width="0.7"/><circle cx="87" cy="485.6" r="2.1" fill="#f2f2f2" stroke="#181818" stroke-width="0.7"/><circle cx="95.75" cy="485.6" r="2.1" fill="#f2f2f2" stroke="#181818" stroke-width="0.7"/><circle cx="104.5" cy="485.6" r="2.1" fill="#f2f2f2" stroke="#181818" stroke-width="0.7"/><circle cx="113.25" cy="485.6" r="2.1" fill="#f2f2f2" stroke="#181818" stroke-width="0.7"/><circle cx="122" cy="485.6" r="2.1" fill="#f2f2f2" stroke="#181818" stroke-width="0.7"/><circle cx="166.75" cy="485.6" r="2.1" fill="#f2f2f2" stroke="#181818" stroke-width="0.7"/><circle cx="193.25" cy="485.6" r="2.1" fill="#f2f2f2" stroke="#181818" stroke-width="0.7"/><circle cx="211.25" cy="485.6" r="2.1" fill="#f2f2f2" stroke="#181818" stroke-width="0.7"/><circle cx="220" cy="485.6" r="2.1" fill="#f2f2f2" stroke="#181818" stroke-width="0.7"/><circle cx="228.75" cy="485.6" r="2.1" fill="#f2f2f2" stroke="#181818" stroke-width="0.7"/><circle cx="246.4" cy="485.6" r="2.1" fill="#f2f2f2" stroke="#181818" stroke-width="0.7"/><circle cx="264.4" cy="485.6" r="2.1" fill="#f2f2f2" stroke="#181818" stroke-width="0.7"/><circle cx="317.4" cy="485.6" r="2.1" fill="#f2f2f2" stroke="#181818" stroke-width="0.7"/><circle cx="335.4" cy="485.6" r="2.1" fill="#f2f2f2" stroke="#181818" stroke-width="0.7"/><circle cx="344" cy="485.6" r="2.1" fill="#f2f2f2" stroke="#181818" stroke-width="0.7"/><circle cx="362" cy="485.6" r="2.1" fill="#f2f2f2" stroke="#181818" stroke-width="0.7"/><circle cx="388.3" cy="485.6" r="2.1" fill="#f2f2f2" stroke="#181818" stroke-width="0.7"/><circle cx="406.4" cy="485.6" r="2.1" fill="#f2f2f2" stroke="#181818" stroke-width="0.7"/><circle cx="415" cy="485.6" r="2.1" fill="#f2f2f2" stroke="#181818" stroke-width="0.7"/><circle cx="450.5" cy="485.6" r="2.1" fill="#f2f2f2" stroke="#181818" stroke-width="0.7"/><circle cx="459.5" cy="485.6" r="2.1" fill="#f2f2f2" stroke="#181818" stroke-width="0.7"/><circle cx="468.3" cy="485.6" r="2.1" fill="#f2f2f2" stroke="#181818" stroke-width="0.7"/><circle cx="477.3" cy="485.6" r="2.1" fill="#f2f2f2" stroke="#181818" stroke-width="0.7"/><circle cx="486" cy="485.6" r="2.1" fill="#f2f2f2" stroke="#181818" stroke-width="0.7"/><circle cx="495" cy="485.6" r="2.1" fill="#f2f2f2" stroke="#181818" stroke-width="0.7"/><circle cx="512.5" cy="485.6" r="2.1" fill="#f2f2f2" stroke="#181818" stroke-width="0.7"/><circle cx="530" cy="485.6" r="2.1" fill="#f2f2f2" stroke="#181818" stroke-width="0.7"/><circle cx="548" cy="485.6" r="2.1" fill="#f2f2f2" stroke="#181818" stroke-width="0.7"/><circle cx="557" cy="485.6" r="2.1" fill="#f2f2f2" stroke="#181818" stroke-width="0.7"/><circle cx="628" cy="485.6" r="2.1" fill="#f2f2f2" stroke="#181818" stroke-width="0.7"/><circle cx="636.7" cy="485.6" r="2.1" fill="#f2f2f2" stroke="#181818" stroke-width="0.7"/><circle cx="663.4" cy="485.6" r="2.1" fill="#f2f2f2" stroke="#181818" stroke-width="0.7"/><circle cx="681" cy="485.6" r="2.1" fill="#f2f2f2" stroke="#181818" stroke-width="0.7"/><circle cx="690" cy="485.6" r="2.1" fill="#f2f2f2" stroke="#181818" stroke-width="0.7"/><circle cx="725.4" cy="485.6" r="2.1" fill="#f2f2f2" stroke="#181818" stroke-width="0.7"/><circle cx="743" cy="485.6" r="2.1" fill="#f2f2f2" stroke="#181818" stroke-width="0.7"/><rect x="129.65" y="484.6" width="3.2" height="2" fill="#d8d8d8" stroke="#181818" stroke-width="0.4"/><rect x="138.4" y="484.6" width="3.2" height="2" fill="#d8d8d8" stroke="#181818" stroke-width="0.4"/><rect x="147.15" y="484.6" width="3.2" height="2" fill="#d8d8d8" stroke="#181818" stroke-width="0.4"/><circle cx="33.8" cy="495" r="2.1" fill="#f2f2f2" stroke="#181818" stroke-width="0.7"/><circle cx="157.5" cy="495" r="2.1" fill="#f2f2f2" stroke="#181818" stroke-width="0.7"/><circle cx="202.5" cy="495" r="2.1" fill="#f2f2f2" stroke="#181818" stroke-width="0.7"/><circle cx="264.4" cy="495" r="2.1" fill="#f2f2f2" stroke="#181818" stroke-width="0.7"/><circle cx="317.4" cy="495" r="2.1" fill="#f2f2f2" stroke="#181818" stroke-width="0.7"/><circle cx="344" cy="495" r="2.1" fill="#f2f2f2" stroke="#181818" stroke-width="0.7"/><circle cx="450.5" cy="495" r="2.1" fill="#f2f2f2" stroke="#181818" stroke-width="0.7"/><circle cx="468.3" cy="495" r="2.1" fill="#f2f2f2" stroke="#181818" stroke-width="0.7"/><circle cx="486" cy="495" r="2.1" fill="#f2f2f2" stroke="#181818" stroke-width="0.7"/><circle cx="512.5" cy="495" r="2.1" fill="#f2f2f2" stroke="#181818" stroke-width="0.7"/><circle cx="530" cy="495" r="2.1" fill="#f2f2f2" stroke="#181818" stroke-width="0.7"/><circle cx="557" cy="495" r="2.1" fill="#f2f2f2" stroke="#181818" stroke-width="0.7"/><circle cx="734.4" cy="495" r="2.1" fill="#f2f2f2" stroke="#181818" stroke-width="0.7"/><circle cx="29.5" cy="495" r="2.1" fill="#f2f2f2" stroke="#181818" stroke-width="0.7"/><circle cx="450.5" cy="523.3" r="2.1" fill="#f2f2f2" stroke="#181818" stroke-width="0.7"/><circle cx="468.3" cy="523.3" r="2.1" fill="#f2f2f2" stroke="#181818" stroke-width="0.7"/><circle cx="486" cy="523.3" r="2.1" fill="#f2f2f2" stroke="#181818" stroke-width="0.7"/><circle cx="512.5" cy="523.3" r="2.1" fill="#f2f2f2" stroke="#181818" stroke-width="0.7"/><circle cx="95.75" cy="542.2" r="2.1" fill="#f2f2f2" stroke="#181818" stroke-width="0.7"/><circle cx="122.5" cy="542.2" r="2.1" fill="#f2f2f2" stroke="#181818" stroke-width="0.7"/><circle cx="140.5" cy="542.2" r="2.1" fill="#f2f2f2" stroke="#181818" stroke-width="0.7"/><circle cx="166.75" cy="542.2" r="2.1" fill="#f2f2f2" stroke="#181818" stroke-width="0.7"/><rect x="147.65" y="541.2" width="3.2" height="2" fill="#d8d8d8" stroke="#181818" stroke-width="0.4"/><rect x="191.65" y="541.2" width="3.2" height="2" fill="#d8d8d8" stroke="#181818" stroke-width="0.4"/><rect x="28.0" y="503.0" width="3" height="3" fill="none" stroke="#d0d0d0" stroke-width="0.7"/><rect x="32.3" y="503.0" width="3" height="3" fill="none" stroke="#d0d0d0" stroke-width="0.7"/><rect x="28.0" y="540.7" width="3" height="3" fill="none" stroke="#d0d0d0" stroke-width="0.7"/><rect x="32.3" y="540.7" width="3" height="3" fill="none" stroke="#d0d0d0" stroke-width="0.7"/><rect x="28.0" y="484.1" width="3" height="3" fill="none" stroke="#d0d0d0" stroke-width="0.7"/><circle cx="33.8" cy="485.6" r="2.1" fill="#f2f2f2" stroke="#181818" stroke-width="0.7"/><rect x="28.0" y="521.8" width="3" height="3" fill="none" stroke="#d0d0d0" stroke-width="0.7"/><rect x="682" y="483.5" width="6" height="4" fill="#e8e8e8" stroke="#222" stroke-width="0.5"/><path d="M5.5,462.5 h5 v3.5 q0,3 -2.5,4 q-2.5,-1 -2.5,-4z" fill="none" stroke="#a0a0a0" stroke-width="0.8"/><circle cx="8" cy="466" r="0.8" fill="#a0a0a0"/><circle cx="19" cy="466" r="1.55" fill="#eeeeee"/><path d="M3.5,482 q2.5,-1 4.5,1 q2,-2 4.5,-1 q0.5,3 -1,4 q1.5,1 1,3 q-2.5,1 -4.5,-1 q-2,2 -4.5,1 q-0.5,-2 1,-3 q-1.5,-1 -1,-4z" fill="none" stroke="#b8b8b8" stroke-width="0.9"/><circle cx="9" cy="487.5" r="1.6" fill="none" stroke="#ccc" stroke-width="0.7"/><circle cx="19" cy="486" r="1.55" fill="#eeeeee"/><path d="M3.5,491.5 q2.5,-1 4.5,1 q2,-2 4.5,-1 q0.5,3 -1,4 q1.5,1 1,3 q-2.5,1 -4.5,-1 q-2,2 -4.5,1 q-0.5,-2 1,-3 q-1.5,-1 -1,-4z" fill="none" stroke="#b8b8b8" stroke-width="0.9"/><path d="M8,494 v5 M6,496.5 h4" stroke="#ddd" stroke-width="0.8"/><circle cx="19" cy="495" r="1.55" fill="#eeeeee"/><path d="M3.5,501 q2.5,-1 4.5,1 q2,-2 4.5,-1 q0.5,3 -1,4 q1.5,1 1,3 q-2.5,1 -4.5,-1 q-2,2 -4.5,1 q-0.5,-2 1,-3 q-1.5,-1 -1,-4z" fill="none" stroke="#b8b8b8" stroke-width="0.9"/><path d="M4,506.5 h8" stroke="#ccc" stroke-width="0.8"/><circle cx="19" cy="504.5" r="1.55" fill="#eeeeee"/><path d="M3.5,519.5 q2.5,-1 4.5,1 q2,-2 4.5,-1 q0.5,3 -1,4 q1.5,1 1,3 q-2.5,1 -4.5,-1 q-2,2 -4.5,1 q-0.5,-2 1,-3 q-1.5,-1 -1,-4z" fill="none" stroke="#c02020" stroke-width="0.9"/><path d="M6,525 q2,3 4,0" fill="none" stroke="#c02020" stroke-width="0.8"/><circle cx="19" cy="523.3" r="1.55" fill="#eeeeee"/><path d="M3.5,539 q2.5,-1 4.5,1 q2,-2 4.5,-1 q0.5,3 -1,3.5 q1.5,0.5 1,3 q-2.5,1 -4.5,-1 q-2,2 -4.5,1 q-0.5,-2.5 1,-3 q-1.5,-0.5 -1,-3.5z" fill="#e0701a" stroke="#c02020" stroke-width="0.6"/><circle cx="19" cy="542.2" r="1.55" fill="#eeeeee"/><rect x="745.5" y="446.5" width="8" height="15" fill="#333"/><path d="M747.5,443 L749.5,440 L751.5,443 Z" fill="#888"/><path d="M747.5,539.5 L749.5,542.5 L751.5,539.5 Z" fill="#888"/><path d="M738.5,548.5 L741.5,550.5 L738.5,552.5 Z" fill="#888"/><path d="M31.5,548.5 L28.5,550.5 L31.5,552.5 Z" fill="#666"/><rect x="33" y="546.5" width="18" height="8" fill="#323232"/></svg>
<div class="t" style="left:-120.0px;width:300px;text-align:center;top:455.20px;font-size:5.5px;line-height:6.60px;color:#4aa898;font-weight:normal;">0</div>
<div class="t" style="left:-13.608000000000004px;width:300px;text-align:center;top:455.20px;font-size:5.5px;line-height:6.60px;color:#9a9a9a;font-weight:normal;">1</div>
<div class="t" style="left:92.78399999999999px;width:300px;text-align:center;top:455.20px;font-size:5.5px;line-height:6.60px;color:#9a9a9a;font-weight:normal;">2</div>
<div class="t" style="left:199.176px;width:300px;text-align:center;top:455.20px;font-size:5.5px;line-height:6.60px;color:#9a9a9a;font-weight:normal;">3</div>
<div class="t" style="left:305.568px;width:300px;text-align:center;top:455.20px;font-size:5.5px;line-height:6.60px;color:#9a9a9a;font-weight:normal;">4</div>
<div class="t" style="left:411.96000000000004px;width:300px;text-align:center;top:455.20px;font-size:5.5px;line-height:6.60px;color:#9a9a9a;font-weight:normal;">5</div>
<div class="t" style="left:518.352px;width:300px;text-align:center;top:455.20px;font-size:5.5px;line-height:6.60px;color:#9a9a9a;font-weight:normal;">6</div>
<div class="t" style="left:-120.5px;width:300px;text-align:center;top:437.70px;font-size:5.5px;line-height:6.60px;color:#b0d0c8;font-weight:normal;">0</div>
<svg class="a" style="left:0px;top:0px;" width="960" height="564" viewBox="0 0 960 564"><rect x="27" y="426" width="14" height="10" rx="1" fill="#1f1f1f"/><path d="M36,429.5 h4 l-1.2,-1.2 M40,433 h-4 l1.2,1.2" fill="none" stroke="#d8d8d8" stroke-width="0.9"/><rect x="45.5" y="426" width="18.5" height="10" rx="1.5" fill="#1f3532" stroke="#2a5f58" stroke-width="0.8"/><line x1="49.5" y1="431" x2="60.5" y2="431" stroke="#d8d8d8" stroke-width="1"/><circle cx="49.5" cy="431" r="2" fill="#ddd" stroke="#222" stroke-width="0.5"/><circle cx="60.5" cy="431" r="2" fill="#ddd" stroke="#222" stroke-width="0.5"/><rect x="67.5" y="427" width="9.5" height="4" fill="#d8d8d8"/><rect x="73" y="431" width="10" height="4" rx="1" fill="none" stroke="#d8d8d8" stroke-width="0.9"/><path d="M88.5,428.5 L96,433.5 L101.5,434" fill="none" stroke="#d8d8d8" stroke-width="0.9"/><circle cx="88.5" cy="428.5" r="1.7" fill="#ccc" stroke="#222" stroke-width="0.4"/><circle cx="101.5" cy="434" r="1.7" fill="#ccc" stroke="#222" stroke-width="0.4"/><ellipse cx="116" cy="431" rx="4.8" ry="3.8" fill="#777" transform="rotate(-30 116 431)"/><ellipse cx="117.5" cy="430" rx="2.5" ry="2.8" fill="#222" stroke="#3bb3a6" stroke-width="0.8" transform="rotate(-30 117.5 430)"/><rect x="125.7" y="426" width="44.7" height="10" rx="1.5" fill="#222"/><path d="M164.5,429.5 h3.5 l-1.75,3z" fill="#777"/><circle cx="180.5" cy="428.3" r="1" fill="#ddd"/><circle cx="180.5" cy="433.8" r="1" fill="#3bb3a6"/><circle cx="184.0" cy="428.3" r="1" fill="#ddd"/><circle cx="184.0" cy="433.8" r="1" fill="#3bb3a6"/><circle cx="187.5" cy="428.3" r="1" fill="#ddd"/><circle cx="187.5" cy="433.8" r="1" fill="#3bb3a6"/><circle cx="194.5" cy="433.5" r="1.6" fill="none" stroke="#d8d8d8" stroke-width="0.8"/><circle cx="200.5" cy="433.5" r="1.6" fill="none" stroke="#d8d8d8" stroke-width="0.8"/><path d="M196,433.5 h3 M198,431.5 l1.5,-3.5 l1.5,3.5" fill="none" stroke="#d8d8d8" stroke-width="0.8"/><circle cx="212.5" cy="431.5" r="2.2" fill="none" stroke="#d8d8d8" stroke-width="1"/><path d="M214.7,431.5 h6 M218.5,431.5 v-2" stroke="#d8d8d8" stroke-width="1"/><path d="M232.5,428.5 a3.5,3.5 0 1 1 -4.5,0.5" fill="none" stroke="#d8d8d8" stroke-width="0.9"/><path d="M226.5,427.5 l2,1.5 l-2.2,1.2z" fill="#d8d8d8"/><text x="230.3" y="433.3" font-size="4" fill="#d8d8d8" text-anchor="middle" font-family="Liberation Sans">R</text><rect x="244.6" y="426" width="49.4" height="10" rx="1.5" fill="#222"/><path d="M288.5,429.5 h3.5 l-1.75,3z" fill="#777"/><rect x="296" y="426" width="20" height="10" rx="1.5" fill="#222"/><path d="M312.5,429.5 h3.5 l-1.75,3z" fill="#777"/><rect x="321.5" y="427" width="11" height="8.5" rx="1" fill="#111" stroke="#cfcfcf" stroke-width="1"/><text x="327" y="433.8" font-size="5.5" fill="#eee" text-anchor="middle" font-family="Liberation Sans">K</text><circle cx="342" cy="431" r="1.9" fill="#ddd"/><path d="M344.5,431 h4.5 M346,429.5 l-1.5,1.5 l1.5,1.5" fill="none" stroke="#3bb3a6" stroke-width="0.9"/><path d="M353,431 h4.5 M356,429.5 l1.5,1.5 l-1.5,1.5" fill="none" stroke="#3bb3a6" stroke-width="0.9"/><circle cx="360.5" cy="431" r="1.9" fill="#ddd"/><path d="M395,427.5 h6 v4 l-3,4 l-3,-4z" fill="none" stroke="#d8d8d8" stroke-width="0.9"/><circle cx="401.5" cy="435" r="1" fill="#3bb3a6"/><path d="M411,428 h4 q3,0 4,3 q-1,3 -4,3 h-4 M411,431 h8" fill="none" stroke="#d8d8d8" stroke-width="0.9"/><circle cx="420.5" cy="431" r="1.5" fill="#3bb3a6"/><path d="M425.5,429 h3 l1,-1.5 h2.5 l1,1.5 h2 v6 h-9.5z" fill="none" stroke="#d8d8d8" stroke-width="0.9"/><path d="M426,427 l9,9" stroke="#3bb3a6" stroke-width="0.9"/><path d="M441,428 h6 l1,1 v6 h-7z" fill="none" stroke="#d8d8d8" stroke-width="0.9"/><path d="M440,427 l9,9" stroke="#3bb3a6" stroke-width="0.9"/><rect x="700" y="426" width="20" height="10" rx="1.5" fill="#222"/><path d="M715,429.5 h3.5 l-1.75,3z" fill="#777"/><circle cx="728" cy="430" r="3" fill="none" stroke="#ddd" stroke-width="1"/><path d="M726,432.5 l-2.5,2.5" stroke="#ddd" stroke-width="1.3"/><path d="M726.5,430 h3" stroke="#ddd" stroke-width="0.8"/><circle cx="746" cy="430" r="3" fill="none" stroke="#ddd" stroke-width="1"/><path d="M744,432.5 l-2.5,2.5" stroke="#ddd" stroke-width="1.3"/><path d="M744.5,430 h3" stroke="#ddd" stroke-width="0.8"/><rect x="289" y="413.5" width="12" height="8.5" rx="1" fill="#222"/><path d="M291,415.5 L295,417.75 L291,420z M299,415.5 L295,417.75 L299,420z" fill="none" stroke="#666" stroke-width="0.8"/><rect x="302" y="413.5" width="12" height="8.5" rx="1" fill="#222"/><path d="M304,415 v5.5 M312,415 v5.5 M305,417.75 l3,-2.5 v5z M311,417.75 l-3,-2.5 v5z" fill="none" stroke="#666" stroke-width="0.8"/><rect x="315" y="413.5" width="13" height="8.5" rx="1" fill="#222"/><path d="M322,415.5 L318,417.75 L322,420z M326,415.5 L322,417.75 L326,420z" fill="none" stroke="#666" stroke-width="0.8"/><rect x="331" y="413.5" width="12" height="8.5" rx="1" fill="#222"/><path d="M334.5,415 L340,417.75 L334.5,420.5z" fill="none" stroke="#b4b4b4" stroke-width="0.75"/><rect x="344" y="413.5" width="13" height="8.5" rx="1" fill="#222"/><path d="M346,415 L350.5,417.75 L346,420.5z M350.5,415 L355,417.75 L350.5,420.5z" fill="none" stroke="#b4b4b4" stroke-width="0.75"/><rect x="358" y="413.5" width="12" height="8.5" rx="1" fill="#222"/><path d="M360.5,415 L365.5,417.75 L360.5,420.5z M367,415 v5.5" fill="none" stroke="#b4b4b4" stroke-width="0.75"/><rect x="371" y="413.5" width="13" height="8.5" rx="1" fill="#222"/><path d="M373,415 L377.5,417.75 L373,420.5z M382,415 L377.5,417.75 L382,420.5z" fill="none" stroke="#b4b4b4" stroke-width="0.75"/><rect x="409" y="413" width="43" height="9.5" fill="#222"/><rect x="463" y="413" width="41" height="9.5" fill="#222"/><rect x="509.5" y="413" width="12.5" height="9.5" fill="#222"/><path d="M512,416.5 h2 l2.5,-2 v7 l-2.5,-2 h-2z" fill="#cfcfcf"/><path d="M518,415.5 q1.5,2.25 0,4.5 M519.5,414.5 q2.5,3.25 0,6.5" fill="none" stroke="#cfcfcf" stroke-width="0.6"/><rect x="601.5" y="413.5" width="11" height="8" rx="2" fill="#111" stroke="#ddd" stroke-width="0.8"/><path d="M604,418.5 h6 M604,416.5 h3" stroke="#ddd" stroke-width="0.7"/><rect x="613.5" y="413" width="11" height="9" fill="#1d1d1d" stroke="#2a6b62" stroke-width="0.8"/><rect x="626" y="413.5" width="10.5" height="8.5" fill="#5a5a5a"/><path d="M629.5,413.5 v8.5 M633,413.5 v8.5" stroke="#8a7a7a" stroke-width="0.8"/><rect x="638" y="413.5" width="10.5" height="8.5" fill="#5a5a5a"/><path d="M638,417.75 h10.5 M643.25,413.5 v8.5" stroke="#9a8a80" stroke-width="0.8"/><rect x="650" y="413.5" width="10.5" height="8.5" fill="#5a5a5a"/><path d="M650,417.75 h10.5 M655.25,413.5 v8.5" stroke="#8a8a9a" stroke-width="0.9"/><rect x="656.5" y="413" width="11.5" height="9.5" fill="#1f3532" stroke="#2a5f58" stroke-width="0.7"/><rect x="680.5" y="413" width="11.5" height="9.5" fill="#1f3532" stroke="#2a5f58" stroke-width="0.7"/><rect x="692.5" y="413" width="11.5" height="9.5" fill="#1f3532" stroke="#2a5f58" stroke-width="0.7"/><rect x="704.5" y="413" width="11.5" height="9.5" fill="#1f3532" stroke="#2a5f58" stroke-width="0.7"/><path d="M659.5,421 v-3 a2.75,3 0 0 1 5.5,0 v3" fill="none" stroke="#ddd" stroke-width="1"/><rect x="658.8" y="419" width="1.6" height="2.4" fill="#ddd"/><rect x="664.3" y="419" width="1.6" height="2.4" fill="#ddd"/><circle cx="674.5" cy="417.75" r="3.8" fill="none" stroke="#ddd" stroke-width="1"/><text x="674.5" y="419.5" font-size="4" fill="#ddd" text-anchor="middle" font-family="Liberation Sans">3D</text><rect x="683" y="414.5" width="6.5" height="7" fill="none" stroke="#ddd" stroke-width="0.9"/><path d="M684.5,418 h3.5" stroke="#ddd" stroke-width="0.7"/><circle cx="696" cy="418" r="2" fill="none" stroke="#ddd" stroke-width="0.9"/><circle cx="701" cy="418" r="2" fill="none" stroke="#ddd" stroke-width="0.9"/><path d="M694,416 q4.5,-2 9,0" fill="none" stroke="#ddd" stroke-width="0.7"/><path d="M707,421.5 l6.5,-7" stroke="#ddd" stroke-width="1.2"/><rect x="719" y="413" width="34" height="9.5" rx="1" fill="#222"/><path d="M747.5,416.5 h3.5 l-1.75,3z" fill="#777"/></svg>
<div class="t" style="left:29px;top:427.10px;font-size:6.5px;line-height:7.80px;color:#ddd;font-weight:normal;">0</div>
<div class="t" style="left:129px;top:428.00px;font-size:5.5px;line-height:6.60px;color:#6a6a6a;font-weight:normal;">Onion Skins</div>
<div class="t" style="left:247.5px;top:428.00px;font-size:5.5px;line-height:6.60px;color:#c8c8c8;font-weight:normal;">Copy Previou...</div>
<div class="t" style="left:304px;top:428.00px;font-size:5.5px;line-height:6.60px;color:#c8c8c8;font-weight:normal;">1</div>
<div class="t" style="left:366.5px;top:427.70px;font-size:6px;line-height:7.20px;color:#3bb3a6;font-weight:normal;">2</div>
<div class="t" style="left:391px;top:414.70px;font-size:5.5px;line-height:6.60px;color:#c8c8c8;font-weight:normal;">Frame</div>
<div class="t" style="left:412.5px;top:414.70px;font-size:5.5px;line-height:6.60px;color:#3bb3a6;font-weight:normal;">0</div>
<div class="t" style="left:454px;top:414.70px;font-size:5.5px;line-height:6.60px;color:#c8c8c8;font-weight:normal;">of</div>
<div class="t" style="left:464.5px;top:414.70px;font-size:5.5px;line-height:6.60px;color:#3bb3a6;font-weight:normal;">337</div>
<div class="t" style="left:722px;top:414.70px;font-size:5.5px;line-height:6.60px;color:#c8c8c8;font-weight:normal;">Display</div>
<div class="t" style="left:704px;top:427.70px;font-size:6px;line-height:7.20px;color:#d0d0d0;font-weight:normal;">2</div>
<svg class="a" style="left:0px;top:0px;" width="960" height="564" viewBox="0 0 960 564"><rect x="780.5" y="31" width="30.5" height="10.5" rx="1.5" fill="#1d1d1d"/><rect x="762" y="47.5" width="52" height="9.5" rx="1.5" fill="#1f1f1f"/><path d="M806.75,50.95 h3.5 l-1.75,2.8z" fill="#9a9a9a"/><rect x="819" y="47.5" width="52" height="9.5" rx="1.5" fill="#1f1f1f"/><path d="M863.75,50.95 h3.5 l-1.75,2.8z" fill="#9a9a9a"/><rect x="782.5" y="72" width="74.5" height="9.5" fill="#3d3d3d"/><rect x="761" y="89" width="6" height="6" fill="#1a1a1a"/><path d="M762,91.5 l1.8,2.5 l3,-5.5" fill="none" stroke="#3bb3a6" stroke-width="1.1"/><rect x="793" y="87" width="20.5" height="9.5" rx="1.5" fill="#fbfbfb"/><path d="M818,96 l6.5,-7" stroke="#aaa" stroke-width="1.6" stroke-linecap="round"/><path d="M823,90.5 l2.5,-2.5" stroke="#3bb3a6" stroke-width="2.2" stroke-linecap="round"/><rect x="833" y="89" width="6.5" height="6.5" fill="#1d1d1d"/><rect x="793" y="100" width="59" height="9.5" rx="1.5" fill="#1f1f1f"/><path d="M844.75,103.45 h3.5 l-1.75,2.8z" fill="#9a9a9a"/><rect x="858" y="100" width="14.5" height="10" rx="1" fill="#1f1f1f"/><rect x="793" y="111.5" width="59" height="9.5" rx="1.5" fill="#1f1f1f"/><path d="M844.75,114.95 h3.5 l-1.75,2.8z" fill="#9a9a9a"/><rect x="858" y="111.5" width="14.5" height="10" rx="1" fill="#1f1f1f"/><rect x="761" y="129" width="6" height="6" fill="#1a1a1a"/><path d="M762,131.5 l1.8,2.5 l3,-5.5" fill="none" stroke="#3bb3a6" stroke-width="1.1"/><rect x="793" y="127.5" width="20.5" height="9.5" rx="1.5" fill="#161616"/><path d="M818,136.5 l6.5,-7" stroke="#aaa" stroke-width="1.6" stroke-linecap="round"/><path d="M823,131.0 l2.5,-2.5" stroke="#3bb3a6" stroke-width="2.2" stroke-linecap="round"/><rect x="833" y="129.5" width="6.5" height="6.5" fill="#1d1d1d"/><rect x="833" y="141" width="6.5" height="6.5" fill="#1d1d1d"/><rect x="849.5" y="127" width="21" height="21.5" fill="#d4d4d4" stroke="#eeeeee" stroke-width="0.8"/><rect x="793" y="140" width="35.5" height="8.5" rx="1" fill="#1d1d1d"/><rect x="793" y="151" width="59" height="10" rx="1.5" fill="#1f1f1f"/><path d="M844.75,154.7 h3.5 l-1.75,2.8z" fill="#9a9a9a"/><rect x="858" y="151" width="14.5" height="10" rx="1" fill="#1f1f1f"/><rect x="761" y="165.5" width="6" height="6" fill="#1a1a1a"/><path d="M762,168.0 l1.8,2.5 l3,-5.5" fill="none" stroke="#3bb3a6" stroke-width="1.1"/><rect x="795" y="180" width="69" height="9" rx="1.5" fill="#1f1f1f"/><path d="M856.75,183.2 h3.5 l-1.75,2.8z" fill="#9a9a9a"/><rect x="795" y="191.5" width="69" height="9.5" rx="1.5" fill="#1f1f1f"/><path d="M856.75,194.95 h3.5 l-1.75,2.8z" fill="#9a9a9a"/><rect x="795" y="203.5" width="30" height="9.5" rx="1.5" fill="#3a3a3a"/><rect x="795" y="216" width="69" height="9.5" rx="1.5" fill="#1f1f1f"/><path d="M856.75,219.45 h3.5 l-1.75,2.8z" fill="#9a9a9a"/><rect x="772.3" y="292" width="25" height="9" rx="1" fill="#1f1f1f"/><rect x="802.8" y="292" width="25.7" height="9" rx="1" fill="#1f1f1f"/><rect x="834.6" y="292" width="27.1" height="9" rx="1" fill="#1f1f1f"/><rect x="761" y="305.7" width="6" height="6" fill="#1a1a1a"/><path d="M762,308.2 l1.8,2.5 l3,-5.5" fill="none" stroke="#3bb3a6" stroke-width="1.1"/><rect x="803.5" y="305.7" width="6" height="6" fill="#1a1a1a"/><path d="M804.5,308.2 l1.8,2.5 l3,-5.5" fill="none" stroke="#3bb3a6" stroke-width="1.1"/></svg>
<div class="t" style="left:762.5px;top:32.92px;font-size:6.8px;line-height:8.16px;color:#d8d8d8;font-weight:normal;">Style</div>
<div class="t" style="left:784.5px;top:32.72px;font-size:6.8px;line-height:8.16px;color:#d8d8d8;font-weight:normal;">Actions</div>
<div class="t" style="left:636px;width:300px;text-align:center;top:49.20px;font-size:5.5px;line-height:6.60px;color:#cfcfcf;font-weight:normal;">Shapes</div>
<div class="t" style="left:693px;width:300px;text-align:center;top:49.20px;font-size:5.5px;line-height:6.60px;color:#cfcfcf;font-weight:normal;">Styles</div>
<div class="t" style="left:667px;width:300px;text-align:center;top:61.28px;font-size:6.2px;line-height:7.44px;color:#cfcfcf;font-weight:normal;">DEFAULTS (For new shapes)</div>
<div class="t" style="left:761px;top:73.70px;font-size:5.5px;line-height:6.60px;color:#c8c8c8;font-weight:normal;">Name</div>
<div class="t" style="left:761px;top:101.20px;font-size:5.5px;line-height:6.60px;color:#c8c8c8;font-weight:normal;">Effect 1</div>
<div class="t" style="left:761px;top:113.00px;font-size:5.5px;line-height:6.60px;color:#c8c8c8;font-weight:normal;">Effect 2</div>
<div class="t" style="left:761px;top:141.10px;font-size:5.5px;line-height:6.60px;color:#c8c8c8;font-weight:normal;">Width</div>
<div class="t" style="left:761px;top:153.00px;font-size:5.5px;line-height:6.60px;color:#c8c8c8;font-weight:normal;">Effect</div>
<div class="t" style="left:761px;top:181.20px;font-size:5.5px;line-height:6.60px;color:#c8c8c8;font-weight:normal;">Style 1</div>
<div class="t" style="left:761px;top:193.10px;font-size:5.5px;line-height:6.60px;color:#c8c8c8;font-weight:normal;">Style 2</div>
<div class="t" style="left:761px;top:205.30px;font-size:5.5px;line-height:6.60px;color:#c8c8c8;font-weight:normal;">Thickness</div>
<div class="t" style="left:761px;top:217.50px;font-size:5.5px;line-height:6.60px;color:#c8c8c8;font-weight:normal;">Swatches</div>
<div class="t" style="left:770px;top:88.70px;font-size:5.5px;line-height:6.60px;color:#5e5e5e;font-weight:normal;">Fill</div>
<div class="t" style="left:770px;top:128.70px;font-size:5.5px;line-height:6.60px;color:#5e5e5e;font-weight:normal;">Stroke</div>
<div class="t" style="left:770px;top:165.20px;font-size:5.5px;line-height:6.60px;color:#c8c8c8;font-weight:normal;">Round caps</div>
<div class="t" style="left:672px;width:300px;text-align:center;top:101.50px;font-size:5.5px;line-height:6.60px;color:#cfcfcf;font-weight:normal;">&lt;plain&gt;</div>
<div class="t" style="left:715.2px;width:300px;text-align:center;top:102.50px;font-size:5.5px;line-height:6.60px;color:#8a8a8a;font-weight:normal;">...</div>
<div class="t" style="left:672px;width:300px;text-align:center;top:113.00px;font-size:5.5px;line-height:6.60px;color:#cfcfcf;font-weight:normal;">&lt;plain&gt;</div>
<div class="t" style="left:715.2px;width:300px;text-align:center;top:114.00px;font-size:5.5px;line-height:6.60px;color:#8a8a8a;font-weight:normal;">...</div>
<div class="t" style="left:672px;width:300px;text-align:center;top:153.00px;font-size:5.5px;line-height:6.60px;color:#cfcfcf;font-weight:normal;">&lt;plain&gt;</div>
<div class="t" style="left:715.2px;width:300px;text-align:center;top:154.00px;font-size:5.5px;line-height:6.60px;color:#8a8a8a;font-weight:normal;">...</div>
<div class="t" style="left:678px;width:300px;text-align:center;top:181.30px;font-size:5.5px;line-height:6.60px;color:#cfcfcf;font-weight:normal;">&lt;None&gt;</div>
<div class="t" style="left:678px;width:300px;text-align:center;top:193.00px;font-size:5.5px;line-height:6.60px;color:#cfcfcf;font-weight:normal;">&lt;None&gt;</div>
<div class="t" style="left:677px;width:300px;text-align:center;top:217.60px;font-size:5.5px;line-height:6.60px;color:#cfcfcf;font-weight:normal;">Basic Colors.png</div>
<div class="t" style="left:710px;width:300px;text-align:center;top:130.06px;font-size:7.4px;line-height:8.88px;color:#000;font-weight:normal;">No</div>
<div class="t" style="left:710px;width:300px;text-align:center;top:138.86px;font-size:7.4px;line-height:8.88px;color:#000;font-weight:normal;">Brush</div>
<div class="t" style="left:795.5px;top:141.10px;font-size:5.5px;line-height:6.60px;color:#3bb3a6;font-weight:normal;">6 px</div>
<div class="t" style="left:635px;width:300px;text-align:center;top:293.00px;font-size:6px;line-height:7.20px;color:#cfcfcf;font-weight:normal;">Copy</div>
<div class="t" style="left:665.6px;width:300px;text-align:center;top:293.00px;font-size:6px;line-height:7.20px;color:#cfcfcf;font-weight:normal;">Paste</div>
<div class="t" style="left:698px;width:300px;text-align:center;top:293.00px;font-size:6px;line-height:7.20px;color:#cfcfcf;font-weight:normal;">Reset</div>
<div class="t" style="left:770px;top:305.40px;font-size:5.5px;line-height:6.60px;color:#c8c8c8;font-weight:normal;">Advanced</div>
<div class="t" style="left:811.5px;top:305.40px;font-size:5.5px;line-height:6.60px;color:#c8c8c8;font-weight:normal;">Checker selection</div>
<svg class="a" style="left:768.8px;top:227.8px;" width="97" height="60.5" viewBox="0 0 97 60.5"><rect x="0.00" y="0.00" width="6.2" height="6.2" fill="#e03a3a"/><rect x="6.07" y="0.00" width="6.2" height="6.2" fill="#f4ec10"/><rect x="12.14" y="0.00" width="6.2" height="6.2" fill="#2ec02e"/><rect x="18.21" y="0.00" width="6.2" height="6.2" fill="#78c8f0"/><rect x="24.28" y="0.00" width="6.2" height="6.2" fill="#0a0ae0"/><rect x="30.35" y="0.00" width="6.2" height="6.2" fill="#f020c0"/><rect x="36.42" y="0.00" width="6.2" height="6.2" fill="#ffffff"/><rect x="42.49" y="0.00" width="6.2" height="6.2" fill="#f0f0f0"/><rect x="48.56" y="0.00" width="6.2" height="6.2" fill="#e4e4e4"/><rect x="54.63" y="0.00" width="6.2" height="6.2" fill="#dadada"/><rect x="60.70" y="0.00" width="6.2" height="6.2" fill="#d0d0d0"/><rect x="66.77" y="0.00" width="6.2" height="6.2" fill="#c8c8c8"/><rect x="72.84" y="0.00" width="6.2" height="6.2" fill="#c0c0c0"/><rect x="78.91" y="0.00" width="6.2" height="6.2" fill="#b8b8b8"/><rect x="84.98" y="0.00" width="6.2" height="6.2" fill="#b0b0b0"/><rect x="91.05" y="0.00" width="6.2" height="6.2" fill="#a8a8a8"/><rect x="0.00" y="6.05" width="6.2" height="6.2" fill="#e03030"/><rect x="6.07" y="6.05" width="6.2" height="6.2" fill="#f0e000"/><rect x="12.14" y="6.05" width="6.2" height="6.2" fill="#108020"/><rect x="18.21" y="6.05" width="6.2" height="6.2" fill="#40a0a0"/><rect x="24.28" y="6.05" width="6.2" height="6.2" fill="#300080"/><rect x="30.35" y="6.05" width="6.2" height="6.2" fill="#e03060"/><rect x="36.42" y="6.05" width="6.2" height="6.2" fill="#8a8a8a"/><rect x="42.49" y="6.05" width="6.2" height="6.2" fill="#7a7a7a"/><rect x="48.56" y="6.05" width="6.2" height="6.2" fill="#6a6a6a"/><rect x="54.63" y="6.05" width="6.2" height="6.2" fill="#5c5c5c"/><rect x="60.70" y="6.05" width="6.2" height="6.2" fill="#4e4e4e"/><rect x="66.77" y="6.05" width="6.2" height="6.2" fill="#404040"/><rect x="72.84" y="6.05" width="6.2" height="6.2" fill="#303030"/><rect x="78.91" y="6.05" width="6.2" height="6.2" fill="#242424"/><rect x="84.98" y="6.05" width="6.2" height="6.2" fill="#181818"/><rect x="91.05" y="6.05" width="6.2" height="6.2" fill="#101010"/><rect x="0.00" y="12.10" width="6.2" height="6.2" fill="#f08060"/><rect x="6.07" y="12.10" width="6.2" height="6.2" fill="#f0a070"/><rect x="12.14" y="12.10" width="6.2" height="6.2" fill="#f0b880"/><rect x="18.21" y="12.10" width="6.2" height="6.2" fill="#f0f080"/><rect x="24.28" y="12.10" width="6.2" height="6.2" fill="#a0e080"/><rect x="30.35" y="12.10" width="6.2" height="6.2" fill="#80d080"/><rect x="36.42" y="12.10" width="6.2" height="6.2" fill="#70d090"/><rect x="42.49" y="12.10" width="6.2" height="6.2" fill="#80c0e0"/><rect x="48.56" y="12.10" width="6.2" height="6.2" fill="#80c8f8"/><rect x="54.63" y="12.10" width="6.2" height="6.2" fill="#a0a0e0"/><rect x="60.70" y="12.10" width="6.2" height="6.2" fill="#b090e0"/><rect x="66.77" y="12.10" width="6.2" height="6.2" fill="#c090d0"/><rect x="72.84" y="12.10" width="6.2" height="6.2" fill="#d090c0"/><rect x="78.91" y="12.10" width="6.2" height="6.2" fill="#f090b0"/><rect x="84.98" y="12.10" width="6.2" height="6.2" fill="#f08090"/><rect x="91.05" y="12.10" width="6.2" height="6.2" fill="#f08080"/><rect x="0.00" y="18.15" width="6.2" height="6.2" fill="#e05040"/><rect x="6.07" y="18.15" width="6.2" height="6.2" fill="#f08020"/><rect x="12.14" y="18.15" width="6.2" height="6.2" fill="#f0a030"/><rect x="18.21" y="18.15" width="6.2" height="6.2" fill="#f8f020"/><rect x="24.28" y="18.15" width="6.2" height="6.2" fill="#70d040"/><rect x="30.35" y="18.15" width="6.2" height="6.2" fill="#30b040"/><rect x="36.42" y="18.15" width="6.2" height="6.2" fill="#30b060"/><rect x="42.49" y="18.15" width="6.2" height="6.2" fill="#40a0a0"/><rect x="48.56" y="18.15" width="6.2" height="6.2" fill="#50b0c0"/><rect x="54.63" y="18.15" width="6.2" height="6.2" fill="#5070d0"/><rect x="60.70" y="18.15" width="6.2" height="6.2" fill="#7050c0"/><rect x="66.77" y="18.15" width="6.2" height="6.2" fill="#9040b0"/><rect x="72.84" y="18.15" width="6.2" height="6.2" fill="#c040a0"/><rect x="78.91" y="18.15" width="6.2" height="6.2" fill="#e04080"/><rect x="84.98" y="18.15" width="6.2" height="6.2" fill="#e04060"/><rect x="91.05" y="18.15" width="6.2" height="6.2" fill="#e04050"/><rect x="0.00" y="24.20" width="6.2" height="6.2" fill="#e03030"/><rect x="6.07" y="24.20" width="6.2" height="6.2" fill="#e06020"/><rect x="12.14" y="24.20" width="6.2" height="6.2" fill="#f08000"/><rect x="18.21" y="24.20" width="6.2" height="6.2" fill="#f0e000"/><rect x="24.28" y="24.20" width="6.2" height="6.2" fill="#40a020"/><rect x="30.35" y="24.20" width="6.2" height="6.2" fill="#109020"/><rect x="36.42" y="24.20" width="6.2" height="6.2" fill="#208040"/><rect x="42.49" y="24.20" width="6.2" height="6.2" fill="#3090a0"/><rect x="48.56" y="24.20" width="6.2" height="6.2" fill="#40a0b0"/><rect x="54.63" y="24.20" width="6.2" height="6.2" fill="#4050c0"/><rect x="60.70" y="24.20" width="6.2" height="6.2" fill="#402090"/><rect x="66.77" y="24.20" width="6.2" height="6.2" fill="#600080"/><rect x="72.84" y="24.20" width="6.2" height="6.2" fill="#900070"/><rect x="78.91" y="24.20" width="6.2" height="6.2" fill="#e03080"/><rect x="84.98" y="24.20" width="6.2" height="6.2" fill="#e03040"/><rect x="91.05" y="24.20" width="6.2" height="6.2" fill="#e03030"/><rect x="0.00" y="30.25" width="6.2" height="6.2" fill="#902020"/><rect x="6.07" y="30.25" width="6.2" height="6.2" fill="#a04010"/><rect x="12.14" y="30.25" width="6.2" height="6.2" fill="#a06010"/><rect x="18.21" y="30.25" width="6.2" height="6.2" fill="#a09000"/><rect x="24.28" y="30.25" width="6.2" height="6.2" fill="#408010"/><rect x="30.35" y="30.25" width="6.2" height="6.2" fill="#106010"/><rect x="36.42" y="30.25" width="6.2" height="6.2" fill="#005030"/><rect x="42.49" y="30.25" width="6.2" height="6.2" fill="#206070"/><rect x="48.56" y="30.25" width="6.2" height="6.2" fill="#204080"/><rect x="54.63" y="30.25" width="6.2" height="6.2" fill="#202070"/><rect x="60.70" y="30.25" width="6.2" height="6.2" fill="#301060"/><rect x="66.77" y="30.25" width="6.2" height="6.2" fill="#400050"/><rect x="72.84" y="30.25" width="6.2" height="6.2" fill="#600040"/><rect x="78.91" y="30.25" width="6.2" height="6.2" fill="#800040"/><rect x="84.98" y="30.25" width="6.2" height="6.2" fill="#a02030"/><rect x="91.05" y="30.25" width="6.2" height="6.2" fill="#902020"/><rect x="0.00" y="36.30" width="6.2" height="6.2" fill="#702020"/><rect x="6.07" y="36.30" width="6.2" height="6.2" fill="#704010"/><rect x="12.14" y="36.30" width="6.2" height="6.2" fill="#705010"/><rect x="18.21" y="36.30" width="6.2" height="6.2" fill="#606000"/><rect x="24.28" y="36.30" width="6.2" height="6.2" fill="#305010"/><rect x="30.35" y="36.30" width="6.2" height="6.2" fill="#005000"/><rect x="36.42" y="36.30" width="6.2" height="6.2" fill="#004020"/><rect x="42.49" y="36.30" width="6.2" height="6.2" fill="#104050"/><rect x="48.56" y="36.30" width="6.2" height="6.2" fill="#103060"/><rect x="54.63" y="36.30" width="6.2" height="6.2" fill="#101050"/><rect x="60.70" y="36.30" width="6.2" height="6.2" fill="#200040"/><rect x="66.77" y="36.30" width="6.2" height="6.2" fill="#300040"/><rect x="72.84" y="36.30" width="6.2" height="6.2" fill="#500040"/><rect x="78.91" y="36.30" width="6.2" height="6.2" fill="#602030"/><rect x="84.98" y="36.30" width="6.2" height="6.2" fill="#702030"/><rect x="91.05" y="36.30" width="6.2" height="6.2" fill="#702020"/><rect x="0.00" y="42.35" width="6.2" height="6.2" fill="#d0b090"/><rect x="6.07" y="42.35" width="6.2" height="6.2" fill="#a08060"/><rect x="12.14" y="42.35" width="6.2" height="6.2" fill="#806050"/><rect x="18.21" y="42.35" width="6.2" height="6.2" fill="#503020"/><rect x="24.28" y="42.35" width="6.2" height="6.2" fill="#403020"/><rect x="30.35" y="42.35" width="6.2" height="6.2" fill="#c09060"/><rect x="36.42" y="42.35" width="6.2" height="6.2" fill="#a07040"/><rect x="42.49" y="42.35" width="6.2" height="6.2" fill="#906040"/><rect x="48.56" y="42.35" width="6.2" height="6.2" fill="#704020"/><rect x="54.63" y="42.35" width="6.2" height="6.2" fill="#ffffff"/><rect x="60.70" y="42.35" width="6.2" height="6.2" fill="#fffff0"/><rect x="66.77" y="42.35" width="6.2" height="6.2" fill="#ffffa0"/><rect x="72.84" y="42.35" width="6.2" height="6.2" fill="#ffff50"/><rect x="78.91" y="42.35" width="6.2" height="6.2" fill="#ffff00"/><rect x="84.98" y="42.35" width="6.2" height="6.2" fill="#ffff00"/><rect x="91.05" y="42.35" width="6.2" height="6.2" fill="#ffff00"/><rect x="0.00" y="48.40" width="6.2" height="6.2" fill="#f8d000"/><rect x="6.07" y="48.40" width="6.2" height="6.2" fill="#f0c0d0"/><rect x="12.14" y="48.40" width="6.2" height="6.2" fill="#f0b0c0"/><rect x="18.21" y="48.40" width="6.2" height="6.2" fill="#f0c080"/><rect x="24.28" y="48.40" width="6.2" height="6.2" fill="#f0b000"/><rect x="30.35" y="48.40" width="6.2" height="6.2" fill="#f0c020"/><rect x="36.42" y="48.40" width="6.2" height="6.2" fill="#f0a000"/><rect x="42.49" y="48.40" width="6.2" height="6.2" fill="#d0a0e0"/><rect x="48.56" y="48.40" width="6.2" height="6.2" fill="#e0a0c0"/><rect x="54.63" y="48.40" width="6.2" height="6.2" fill="#f08080"/><rect x="60.70" y="48.40" width="6.2" height="6.2" fill="#f09060"/><rect x="66.77" y="48.40" width="6.2" height="6.2" fill="#f08000"/><rect x="72.84" y="48.40" width="6.2" height="6.2" fill="#f08020"/><rect x="78.91" y="48.40" width="6.2" height="6.2" fill="#f040c0"/><rect x="84.98" y="48.40" width="6.2" height="6.2" fill="#f040d0"/><rect x="91.05" y="48.40" width="6.2" height="6.2" fill="#f040c0"/><rect x="0.00" y="54.45" width="6.2" height="6.2" fill="#f040a0"/><rect x="6.07" y="54.45" width="6.2" height="6.2" fill="#e04040"/><rect x="12.14" y="54.45" width="6.2" height="6.2" fill="#e04030"/><rect x="18.21" y="54.45" width="6.2" height="6.2" fill="#e04040"/><rect x="24.28" y="54.45" width="6.2" height="6.2" fill="#f020c0"/><rect x="30.35" y="54.45" width="6.2" height="6.2" fill="#f020c0"/><rect x="36.42" y="54.45" width="6.2" height="6.2" fill="#e04040"/><rect x="42.49" y="54.45" width="6.2" height="6.2" fill="#e04040"/><rect x="48.56" y="54.45" width="6.2" height="6.2" fill="#f020c0"/><rect x="54.63" y="54.45" width="6.2" height="6.2" fill="#f020c0"/><rect x="60.70" y="54.45" width="6.2" height="6.2" fill="#e04040"/><rect x="66.77" y="54.45" width="6.2" height="6.2" fill="#e04040"/><rect x="72.84" y="54.45" width="6.2" height="6.2" fill="#e04040"/><rect x="78.91" y="54.45" width="6.2" height="6.2" fill="#e04040"/><rect x="84.98" y="54.45" width="6.2" height="6.2" fill="#e04040"/><rect x="91.05" y="54.45" width="6.2" height="6.2" fill="#ffffff"/></svg>
<svg class="a" style="left:0px;top:0px;" width="960" height="564" viewBox="0 0 960 564"><rect x="757" y="316.5" width="203" height="10.5" fill="#1c1c1c"/><rect x="757" y="327" width="203" height="11.5" fill="#2a2a2a"/><rect x="758" y="328.5" width="12" height="9.5" fill="#222"/><rect x="771" y="328.5" width="12" height="9.5" fill="#222"/><rect x="784.5" y="328.5" width="12" height="9.5" fill="#222"/><rect x="798.5" y="328.5" width="12" height="9.5" fill="#222"/><rect x="812" y="328.5" width="12" height="9.5" fill="#222"/><rect x="826" y="328.5" width="12" height="9.5" fill="#222"/><rect x="936" y="328.5" width="11.5" height="9.5" fill="#222"/><rect x="948" y="328.5" width="11" height="9.5" fill="#222"/><path d="M760,337 v-4 a3,3 0 0 1 6,-1 h1" fill="none" stroke="#c8c8c8" stroke-width="0.9"/><path d="M764.5,333.5 h4 M766.5,331.5 v4" stroke="#3bb3a6" stroke-width="1"/><circle cx="777" cy="333.2" r="3.4" fill="none" stroke="#c8c8c8" stroke-width="0.9"/><circle cx="777.5" cy="333.2" r="2" fill="none" stroke="#c8c8c8" stroke-width="0.7"/><path d="M787,337 v-4 a3,3 0 0 1 6,-1 h1" fill="none" stroke="#c8c8c8" stroke-width="0.9"/><path d="M791.5,333.5 h4 M794,331.8 l1.5,1.7 l-1.5,1.7" fill="none" stroke="#3bb3a6" stroke-width="1"/><rect x="802.5" y="330" width="4.5" height="6.5" rx="0.8" fill="none" stroke="#c8c8c8" stroke-width="0.9"/><path d="M801.8,330 h6" stroke="#c8c8c8" stroke-width="0.8"/><circle cx="815.5" cy="333.5" r="0.8" fill="#c8c8c8"/><circle cx="818" cy="333.5" r="0.8" fill="#c8c8c8"/><circle cx="820.5" cy="333.5" r="0.8" fill="#c8c8c8"/><path d="M829,334 l3,-3.5 l4,1.5 l-1,4.5 l-3.5,0.5z" fill="none" stroke="#c8c8c8" stroke-width="0.9"/><path d="M829,334 l5,2" stroke="#c8c8c8" stroke-width="0.9"/><path d="M939,330 h5 l1,1 v5 l-3,0 l-3,-3z" fill="none" stroke="#c8c8c8" stroke-width="0.9"/><path d="M950.5,335 l3,-3 l3,3" fill="none" stroke="#ddd" stroke-width="1.1"/><rect x="758" y="340" width="82" height="10" rx="1.5" fill="#1f1f1f"/><path d="M832.75,343.7 h3.5 l-1.75,2.8z" fill="#9a9a9a"/><rect x="843.3" y="340" width="112.7" height="9.5" fill="#c9c9c9"/><path d="M764,357.5 q1,-2 2.5,0 M767,357.5 q1,-2 2.5,0" fill="none" stroke="#ddd" stroke-width="0.9"/><path d="M780,353.5 q-2.5,3 -2.5,4.5 a2.5,2.5 0 0 0 5,0 q0,-1.5 -2.5,-4.5z" fill="none" stroke="#bbb" stroke-width="0.8"/><rect x="902" y="354.5" width="2.6" height="2.6" fill="#3bb0e0"/><rect x="904.6" y="354.5" width="2.6" height="2.6" fill="#f0c020"/><rect x="902" y="357.1" width="2.6" height="2.6" fill="#40c040"/><rect x="904.6" y="357.1" width="2.6" height="2.6" fill="#f08020"/><path d="M916.2,355.5 h4 l-2,3z" fill="#ddd"/><rect x="757" y="362.6" width="193" height="11" fill="#303030"/><rect x="757" y="373.1" width="193" height="0.5" fill="#1a1a1a"/><rect x="762" y="364.1" width="9.5" height="8" fill="#3a3a3a"/><path d="M762,368.1 h9.5 M766.75,364.1 v8" stroke="#2a2a2a" stroke-width="0.6"/><rect x="777" y="365.1" width="6.5" height="6.5" fill="#1c1c1c"/><rect x="901.5" y="365.6" width="5.5" height="5.5" fill="#555"/><path d="M799,369.1 q-1,-3.5 2,-4 q2,-1.5 4,0 q3,0 2,3.5 q-0.5,3 -3.5,2.5 q-2,1.5 -4.5,-2z" fill="none" stroke="#5a5a5a" stroke-width="0.9"/><circle cx="804.5" cy="370.6" r="1.1" fill="none"/><rect x="757" y="374.1" width="193" height="10.5" fill="#3aaca4"/><rect x="762.0" y="375.1" width="9.5" height="8" rx="1" fill="#1e1e1e"/><circle cx="764.8" cy="379.40000000000003" r="1.9" fill="none" stroke="#eee" stroke-width="1.1"/><circle cx="768.3" cy="379.40000000000003" r="1.9" fill="none" stroke="#eee" stroke-width="1.1"/><path d="M763.0,378.5 q1.8,-2 3.6,0 M766.5,378.5 q1.8,-2 3.6,0" fill="none" stroke="#fff" stroke-width="0.9"/><rect x="777" y="376.1" width="6.5" height="6.5" fill="#111"/><rect x="901.5" y="376.6" width="5.5" height="5.5" fill="#4a5a58"/><path d="M791.5,377.6 h3.5 l-1.75,2.8z" fill="#e0a0b0"/><g opacity="0.6"><path d="M800.8,379.1 C800.8,377.2 802.3,377.5 803.5,378.5 C804.7,377.5 806.2,377.2 806.2,379.1 C806.2,381.0 804.7,380.7 803.5,379.7 C802.3,380.7 800.8,381.0 800.8,379.1Z" fill="#1c1c1c" stroke="#c8d8d8" stroke-width="0.95"/><circle cx="802.1" cy="379.1" r="0.6" fill="#0c0c0c"/><circle cx="804.9" cy="379.1" r="0.6" fill="#0c0c0c"/></g><path d="M916.5,377.8 h3.5 l-1.75,2.8z" fill="#d0a0c0"/><rect x="757" y="384.6" width="193" height="11" fill="#303030"/><rect x="757" y="395.1" width="193" height="0.5" fill="#1a1a1a"/><rect x="762.0" y="386.1" width="9.5" height="8" rx="1" fill="#1e1e1e"/><circle cx="764.8" cy="390.40000000000003" r="1.9" fill="none" stroke="#eee" stroke-width="1.1"/><circle cx="768.3" cy="390.40000000000003" r="1.9" fill="none" stroke="#eee" stroke-width="1.1"/><path d="M763.0,389.5 q1.8,-2 3.6,0 M766.5,389.5 q1.8,-2 3.6,0" fill="none" stroke="#fff" stroke-width="0.9"/><rect x="777" y="387.1" width="6.5" height="6.5" fill="#1c1c1c"/><rect x="901.5" y="387.6" width="5.5" height="5.5" fill="#555"/><path d="M797.75,388.70000000000005 h3.5 l-1.75,2.8z" fill="#ddd"/><path d="M804.5,393.6 v-6.5 h3 l1,1 h5 v5.5z" fill="#151515" stroke="#dedede" stroke-width="0.9"/><path d="M807.5,392.6 q2,-3 4,-3" stroke="#eee" stroke-width="1.4" fill="none"/><rect x="757" y="395.6" width="193" height="11" fill="#1f1f1f"/><rect x="757" y="406.1" width="193" height="0.5" fill="#1a1a1a"/><rect x="762.0" y="397.1" width="9.5" height="8" rx="1" fill="#1e1e1e"/><circle cx="764.8" cy="401.40000000000003" r="1.9" fill="none" stroke="#eee" stroke-width="1.1"/><circle cx="768.3" cy="401.40000000000003" r="1.9" fill="none" stroke="#eee" stroke-width="1.1"/><path d="M763.0,400.5 q1.8,-2 3.6,0 M766.5,400.5 q1.8,-2 3.6,0" fill="none" stroke="#fff" stroke-width="0.9"/><rect x="901.5" y="398.6" width="5.5" height="5.5" fill="#555"/><path d="M811.5,402.1 q-1,-3.5 2,-4 q2,-1.5 4,0 q3,0 2,3.5 q-0.5,3 -3.5,2.5 q-2,1.5 -4.5,-2z" fill="none" stroke="#5a5a5a" stroke-width="0.9"/><circle cx="817.0" cy="403.6" r="1.1" fill="none"/><rect x="757" y="406.6" width="193" height="11" fill="#303030"/><rect x="757" y="417.1" width="193" height="0.5" fill="#1a1a1a"/><rect x="762.0" y="408.1" width="9.5" height="8" rx="1" fill="#1e1e1e"/><circle cx="764.8" cy="412.40000000000003" r="1.9" fill="none" stroke="#eee" stroke-width="1.1"/><circle cx="768.3" cy="412.40000000000003" r="1.9" fill="none" stroke="#eee" stroke-width="1.1"/><path d="M763.0,411.5 q1.8,-2 3.6,0 M766.5,411.5 q1.8,-2 3.6,0" fill="none" stroke="#fff" stroke-width="0.9"/><rect x="777" y="409.1" width="6.5" height="6.5" fill="#1c1c1c"/><rect x="901.5" y="409.6" width="5.5" height="5.5" fill="#555"/><path d="M811.5,413.1 q-1,-3.5 2,-4 q2,-1.5 4,0 q3,0 2,3.5 q-0.5,3 -3.5,2.5 q-2,1.5 -4.5,-2z" fill="#151515" stroke="#dedede" stroke-width="0.9"/><circle cx="817.0" cy="414.6" r="1.1" fill="#f2f2f2"/><rect x="757" y="417.6" width="193" height="11" fill="#1f1f1f"/><rect x="757" y="428.1" width="193" height="0.5" fill="#1a1a1a"/><rect x="762.0" y="419.1" width="9.5" height="8" rx="1" fill="#1e1e1e"/><circle cx="764.8" cy="423.40000000000003" r="1.9" fill="none" stroke="#eee" stroke-width="1.1"/><circle cx="768.3" cy="423.40000000000003" r="1.9" fill="none" stroke="#eee" stroke-width="1.1"/><path d="M763.0,422.5 q1.8,-2 3.6,0 M766.5,422.5 q1.8,-2 3.6,0" fill="none" stroke="#fff" stroke-width="0.9"/><rect x="901.5" y="420.6" width="5.5" height="5.5" fill="#555"/><path d="M811.5,424.1 q-1,-3.5 2,-4 q2,-1.5 4,0 q3,0 2,3.5 q-0.5,3 -3.5,2.5 q-2,1.5 -4.5,-2z" fill="#151515" stroke="#dedede" stroke-width="0.9"/><circle cx="817.0" cy="425.6" r="1.1" fill="#f2f2f2"/><rect x="757" y="428.6" width="193" height="11" fill="#303030"/><rect x="757" y="439.1" width="193" height="0.5" fill="#1a1a1a"/><rect x="762.0" y="430.1" width="9.5" height="8" rx="1" fill="#1e1e1e"/><circle cx="764.8" cy="434.40000000000003" r="1.9" fill="none" stroke="#eee" stroke-width="1.1"/><circle cx="768.3" cy="434.40000000000003" r="1.9" fill="none" stroke="#eee" stroke-width="1.1"/><path d="M763.0,433.5 q1.8,-2 3.6,0 M766.5,433.5 q1.8,-2 3.6,0" fill="none" stroke="#fff" stroke-width="0.9"/><rect x="777" y="431.1" width="6.5" height="6.5" fill="#1c1c1c"/><rect x="901.5" y="431.6" width="5.5" height="5.5" fill="#555"/><path d="M811.5,435.1 q-1,-3.5 2,-4 q2,-1.5 4,0 q3,0 2,3.5 q-0.5,3 -3.5,2.5 q-2,1.5 -4.5,-2z" fill="#151515" stroke="#dedede" stroke-width="0.9"/><circle cx="817.0" cy="436.6" r="1.1" fill="#f2f2f2"/><rect x="757" y="439.6" width="193" height="11" fill="#1f1f1f"/><rect x="757" y="450.1" width="193" height="0.5" fill="#1a1a1a"/><rect x="762.0" y="441.1" width="9.5" height="8" rx="1" fill="#1e1e1e"/><circle cx="764.8" cy="445.40000000000003" r="1.9" fill="none" stroke="#eee" stroke-width="1.1"/><circle cx="768.3" cy="445.40000000000003" r="1.9" fill="none" stroke="#eee" stroke-width="1.1"/><path d="M763.0,444.5 q1.8,-2 3.6,0 M766.5,444.5 q1.8,-2 3.6,0" fill="none" stroke="#fff" stroke-width="0.9"/><rect x="901.5" y="442.6" width="5.5" height="5.5" fill="#555"/><path d="M803.25,443.70000000000005 h3.5 l-1.75,2.8z" fill="#ddd"/><path d="M810.5,448.6 v-6.5 h3 l1,1 h5 v5.5z" fill="#151515" stroke="#dedede" stroke-width="0.9"/><path d="M813.5,447.6 q2,-3 4,-3" stroke="#eee" stroke-width="1.4" fill="none"/><rect x="757" y="450.6" width="193" height="11" fill="#303030"/><rect x="757" y="461.1" width="193" height="0.5" fill="#1a1a1a"/><rect x="762.0" y="452.1" width="9.5" height="8" rx="1" fill="#1e1e1e"/><circle cx="764.8" cy="456.40000000000003" r="1.9" fill="none" stroke="#eee" stroke-width="1.1"/><circle cx="768.3" cy="456.40000000000003" r="1.9" fill="none" stroke="#eee" stroke-width="1.1"/><path d="M763.0,455.5 q1.8,-2 3.6,0 M766.5,455.5 q1.8,-2 3.6,0" fill="none" stroke="#fff" stroke-width="0.9"/><rect x="777" y="453.1" width="6.5" height="6.5" fill="#1c1c1c"/><rect x="901.5" y="453.6" width="5.5" height="5.5" fill="#555"/><path d="M817.5,457.1 q-1,-3.5 2,-4 q2,-1.5 4,0 q3,0 2,3.5 q-0.5,3 -3.5,2.5 q-2,1.5 -4.5,-2z" fill="#151515" stroke="#dedede" stroke-width="0.9"/><circle cx="823.0" cy="458.6" r="1.1" fill="#f2f2f2"/><rect x="757" y="461.6" width="193" height="11" fill="#1f1f1f"/><rect x="757" y="472.1" width="193" height="0.5" fill="#1a1a1a"/><rect x="762.0" y="463.1" width="9.5" height="8" rx="1" fill="#1e1e1e"/><circle cx="764.8" cy="467.40000000000003" r="1.9" fill="none" stroke="#eee" stroke-width="1.1"/><circle cx="768.3" cy="467.40000000000003" r="1.9" fill="none" stroke="#eee" stroke-width="1.1"/><path d="M763.0,466.5 q1.8,-2 3.6,0 M766.5,466.5 q1.8,-2 3.6,0" fill="none" stroke="#fff" stroke-width="0.9"/><rect x="901.5" y="464.6" width="5.5" height="5.5" fill="#555"/><path d="M817.5,468.1 q-1,-3.5 2,-4 q2,-1.5 4,0 q3,0 2,3.5 q-0.5,3 -3.5,2.5 q-2,1.5 -4.5,-2z" fill="#151515" stroke="#dedede" stroke-width="0.9"/><circle cx="823.0" cy="469.6" r="1.1" fill="#f2f2f2"/><rect x="757" y="472.6" width="193" height="11" fill="#303030"/><rect x="757" y="483.1" width="193" height="0.5" fill="#1a1a1a"/><rect x="762.0" y="474.1" width="9.5" height="8" rx="1" fill="#1e1e1e"/><circle cx="764.8" cy="478.40000000000003" r="1.9" fill="none" stroke="#eee" stroke-width="1.1"/><circle cx="768.3" cy="478.40000000000003" r="1.9" fill="none" stroke="#eee" stroke-width="1.1"/><path d="M763.0,477.5 q1.8,-2 3.6,0 M766.5,477.5 q1.8,-2 3.6,0" fill="none" stroke="#fff" stroke-width="0.9"/><rect x="777" y="475.1" width="6.5" height="6.5" fill="#1c1c1c"/><rect x="901.5" y="475.6" width="5.5" height="5.5" fill="#555"/><path d="M817.5,479.1 q-1,-3.5 2,-4 q2,-1.5 4,0 q3,0 2,3.5 q-0.5,3 -3.5,2.5 q-2,1.5 -4.5,-2z" fill="#151515" stroke="#dedede" stroke-width="0.9"/><circle cx="823.0" cy="480.6" r="1.1" fill="#f2f2f2"/><rect x="757" y="483.6" width="193" height="11" fill="#1f1f1f"/><rect x="757" y="494.1" width="193" height="0.5" fill="#1a1a1a"/><rect x="762.0" y="485.1" width="9.5" height="8" rx="1" fill="#1e1e1e"/><circle cx="764.8" cy="489.40000000000003" r="1.9" fill="none" stroke="#eee" stroke-width="1.1"/><circle cx="768.3" cy="489.40000000000003" r="1.9" fill="none" stroke="#eee" stroke-width="1.1"/><path d="M763.0,488.5 q1.8,-2 3.6,0 M766.5,488.5 q1.8,-2 3.6,0" fill="none" stroke="#fff" stroke-width="0.9"/><rect x="901.5" y="486.6" width="5.5" height="5.5" fill="#555"/><path d="M817.5,490.1 q-1,-3.5 2,-4 q2,-1.5 4,0 q3,0 2,3.5 q-0.5,3 -3.5,2.5 q-2,1.5 -4.5,-2z" fill="#151515" stroke="#dedede" stroke-width="0.9"/><circle cx="823.0" cy="491.6" r="1.1" fill="#f2f2f2"/><rect x="757" y="494.6" width="193" height="11" fill="#303030"/><rect x="757" y="505.1" width="193" height="0.5" fill="#1a1a1a"/><rect x="762.0" y="496.1" width="9.5" height="8" rx="1" fill="#1e1e1e"/><circle cx="764.8" cy="500.40000000000003" r="1.9" fill="none" stroke="#eee" stroke-width="1.1"/><circle cx="768.3" cy="500.40000000000003" r="1.9" fill="none" stroke="#eee" stroke-width="1.1"/><path d="M763.0,499.5 q1.8,-2 3.6,0 M766.5,499.5 q1.8,-2 3.6,0" fill="none" stroke="#fff" stroke-width="0.9"/><rect x="777" y="497.1" width="6.5" height="6.5" fill="#1c1c1c"/><rect x="901.5" y="497.6" width="5.5" height="5.5" fill="#555"/><path d="M817.5,501.1 q-1,-3.5 2,-4 q2,-1.5 4,0 q3,0 2,3.5 q-0.5,3 -3.5,2.5 q-2,1.5 -4.5,-2z" fill="#151515" stroke="#dedede" stroke-width="0.9"/><circle cx="823.0" cy="502.6" r="1.1" fill="#f2f2f2"/><rect x="757" y="505.6" width="193" height="11" fill="#1f1f1f"/><rect x="757" y="516.1" width="193" height="0.5" fill="#1a1a1a"/><rect x="762.0" y="507.1" width="9.5" height="8" rx="1" fill="#1e1e1e"/><circle cx="764.8" cy="511.40000000000003" r="1.9" fill="none" stroke="#eee" stroke-width="1.1"/><circle cx="768.3" cy="511.40000000000003" r="1.9" fill="none" stroke="#eee" stroke-width="1.1"/><path d="M763.0,510.5 q1.8,-2 3.6,0 M766.5,510.5 q1.8,-2 3.6,0" fill="none" stroke="#fff" stroke-width="0.9"/><rect x="901.5" y="508.6" width="5.5" height="5.5" fill="#555"/><path d="M817.5,512.1 q-1,-3.5 2,-4 q2,-1.5 4,0 q3,0 2,3.5 q-0.5,3 -3.5,2.5 q-2,1.5 -4.5,-2z" fill="#151515" stroke="#dedede" stroke-width="0.9"/><circle cx="823.0" cy="513.6" r="1.1" fill="#f2f2f2"/><rect x="757" y="516.6" width="193" height="11" fill="#303030"/><rect x="757" y="527.1" width="193" height="0.5" fill="#1a1a1a"/><rect x="762.0" y="518.1" width="9.5" height="8" rx="1" fill="#1e1e1e"/><circle cx="764.8" cy="522.4" r="1.9" fill="none" stroke="#eee" stroke-width="1.1"/><circle cx="768.3" cy="522.4" r="1.9" fill="none" stroke="#eee" stroke-width="1.1"/><path d="M763.0,521.5 q1.8,-2 3.6,0 M766.5,521.5 q1.8,-2 3.6,0" fill="none" stroke="#fff" stroke-width="0.9"/><rect x="777" y="519.1" width="6.5" height="6.5" fill="#1c1c1c"/><rect x="901.5" y="519.6" width="5.5" height="5.5" fill="#555"/><path d="M817.5,523.1 q-1,-3.5 2,-4 q2,-1.5 4,0 q3,0 2,3.5 q-0.5,3 -3.5,2.5 q-2,1.5 -4.5,-2z" fill="#151515" stroke="#dedede" stroke-width="0.9"/><circle cx="823.0" cy="524.6" r="1.1" fill="#f2f2f2"/><rect x="757" y="527.6" width="193" height="11" fill="#1f1f1f"/><rect x="757" y="538.1" width="193" height="0.5" fill="#1a1a1a"/><rect x="762.0" y="529.1" width="9.5" height="8" rx="1" fill="#1e1e1e"/><circle cx="764.8" cy="533.4" r="1.9" fill="none" stroke="#eee" stroke-width="1.1"/><circle cx="768.3" cy="533.4" r="1.9" fill="none" stroke="#eee" stroke-width="1.1"/><path d="M763.0,532.5 q1.8,-2 3.6,0 M766.5,532.5 q1.8,-2 3.6,0" fill="none" stroke="#fff" stroke-width="0.9"/><rect x="901.5" y="530.6" width="5.5" height="5.5" fill="#555"/><path d="M811.5,534.1 q-1,-3.5 2,-4 q2,-1.5 4,0 q3,0 2,3.5 q-0.5,3 -3.5,2.5 q-2,1.5 -4.5,-2z" fill="#151515" stroke="#dedede" stroke-width="0.9"/><circle cx="817.0" cy="535.6" r="1.1" fill="#f2f2f2"/><rect x="757" y="538.6" width="193" height="11" fill="#303030"/><rect x="757" y="549.1" width="193" height="0.5" fill="#1a1a1a"/><rect x="762.0" y="540.1" width="9.5" height="8" rx="1" fill="#1e1e1e"/><circle cx="764.8" cy="544.4" r="1.9" fill="none" stroke="#eee" stroke-width="1.1"/><circle cx="768.3" cy="544.4" r="1.9" fill="none" stroke="#eee" stroke-width="1.1"/><path d="M763.0,543.5 q1.8,-2 3.6,0 M766.5,543.5 q1.8,-2 3.6,0" fill="none" stroke="#fff" stroke-width="0.9"/><rect x="777" y="541.1" width="6.5" height="6.5" fill="#1c1c1c"/><rect x="901.5" y="541.6" width="5.5" height="5.5" fill="#555"/><path d="M811.5,545.1 q-1,-3.5 2,-4 q2,-1.5 4,0 q3,0 2,3.5 q-0.5,3 -3.5,2.5 q-2,1.5 -4.5,-2z" fill="#151515" stroke="#dedede" stroke-width="0.9"/><circle cx="817.0" cy="546.6" r="1.1" fill="#f2f2f2"/><rect x="950" y="362" width="10" height="184" fill="#1c1c1c"/><rect x="950.5" y="371" width="8" height="16" fill="#343434"/><path d="M953,368 l2,-3 l2,3z" fill="#666"/><path d="M953,538.5 l2,3 l2,-3z" fill="#888"/><rect x="757" y="546" width="193" height="9" fill="#1e1e1e"/><rect x="757" y="546" width="8" height="9" fill="#2e2e2e"/><path d="M944.5,548.5 l3,2 l-3,2z" fill="#888"/></svg>
<div class="t" style="left:708px;width:300px;text-align:center;top:318.70px;font-size:6.5px;line-height:7.80px;color:#d0d0d0;font-weight:normal;">Layers</div>
<div class="t" style="left:647px;width:300px;text-align:center;top:341.72px;font-size:5.8px;line-height:6.96px;color:#cfcfcf;font-weight:normal;">Name contains...</div>
<div class="t" style="left:790px;top:353.72px;font-size:5.8px;line-height:6.96px;color:#c8c8c8;font-weight:normal;">Name</div>
<div class="t" style="left:811px;top:364.78px;font-size:5.7px;line-height:6.84px;color:#5e5e5e;font-weight:normal;">center</div>
<div class="t" style="left:812px;top:375.78px;font-size:5.7px;line-height:6.84px;color:#101010;font-weight:normal;">bag</div>
<div class="t" style="left:817.5px;top:386.78px;font-size:5.7px;line-height:6.84px;color:#cfcfcf;font-weight:normal;">bag</div>
<div class="t" style="left:823.5px;top:397.78px;font-size:5.7px;line-height:6.84px;color:#5e5e5e;font-weight:normal;">bottom fold</div>
<div class="t" style="left:823.5px;top:408.78px;font-size:5.7px;line-height:6.84px;color:#cfcfcf;font-weight:normal;">LR corner</div>
<div class="t" style="left:823.5px;top:419.78px;font-size:5.7px;line-height:6.84px;color:#cfcfcf;font-weight:normal;">bag shadow</div>
<div class="t" style="left:823.5px;top:430.78px;font-size:5.7px;line-height:6.84px;color:#cfcfcf;font-weight:normal;">corner shadow</div>
<div class="t" style="left:823.5px;top:441.78px;font-size:5.7px;line-height:6.84px;color:#cfcfcf;font-weight:normal;">mouth</div>
<div class="t" style="left:830px;top:452.78px;font-size:5.7px;line-height:6.84px;color:#cfcfcf;font-weight:normal;">cheeks</div>
<div class="t" style="left:830px;top:463.78px;font-size:5.7px;line-height:6.84px;color:#cfcfcf;font-weight:normal;">teeth top</div>
<div class="t" style="left:830px;top:474.78px;font-size:5.7px;line-height:6.84px;color:#cfcfcf;font-weight:normal;">teeth btm</div>
<div class="t" style="left:830px;top:485.78px;font-size:5.7px;line-height:6.84px;color:#cfcfcf;font-weight:normal;">teeth top back</div>
<div class="t" style="left:830px;top:496.78px;font-size:5.7px;line-height:6.84px;color:#cfcfcf;font-weight:normal;">teeth btm back</div>
<div class="t" style="left:830px;top:507.78px;font-size:5.7px;line-height:6.84px;color:#cfcfcf;font-weight:normal;">tongue</div>
<div class="t" style="left:830px;top:518.78px;font-size:5.7px;line-height:6.84px;color:#cfcfcf;font-weight:normal;">mouth</div>
<div class="t" style="left:823.5px;top:529.78px;font-size:5.7px;line-height:6.84px;color:#cfcfcf;font-weight:normal;">brows</div>
<div class="t" style="left:823.5px;top:540.78px;font-size:5.7px;line-height:6.84px;color:#cfcfcf;font-weight:normal;">lower lid R</div>
</body></html>
